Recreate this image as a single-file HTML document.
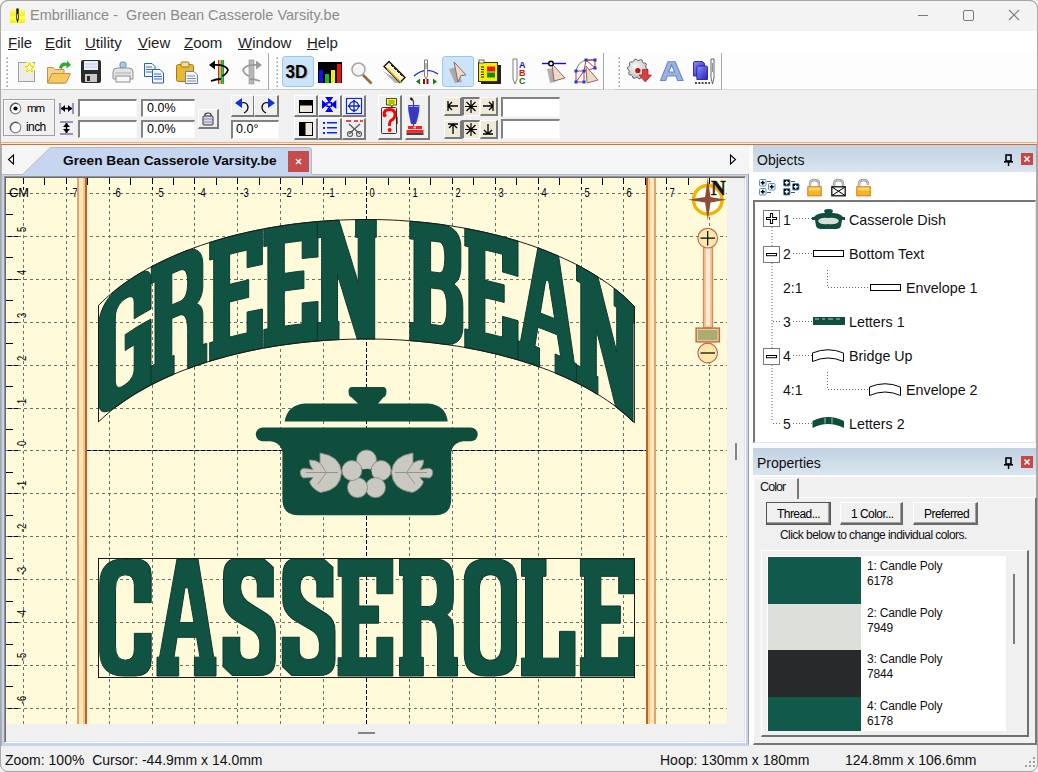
<!DOCTYPE html>
<html><head><meta charset="utf-8"><style>
html,body{margin:0;padding:0;width:1038px;height:772px;overflow:hidden;background:#f0f0f0;}
.a{position:absolute;}
.t{position:absolute;white-space:pre;line-height:1;font-family:"Liberation Sans",sans-serif;}
</style></head><body>
<div class="a" style="left:0px;top:0px;width:1038px;height:772px;background:#f0f0f0;"></div>
<div class="a" style="left:0px;top:0px;width:1038px;height:31px;background:#f3f3f3;"></div>
<div class="a" style="left:1px;top:31px;width:1036px;height:22px;background:#ffffff;"></div>
<div class="a" style="left:1px;top:53px;width:1036px;height:37px;background:#fdfdfd;"></div>
<div class="a" style="left:1px;top:89px;width:1036px;height:1px;background:#dcdcdc;"></div>
<div class="a" style="left:1px;top:142px;width:1036px;height:1px;background:#e9b27a;"></div>
<div class="a" style="left:1px;top:143px;width:1036px;height:1px;background:#fbe7d8;"></div>
<div class="a" style="left:1px;top:144px;width:1036px;height:1px;background:#c9713f;"></div>
<div class="t" style="left:30px;top:8.33px;font-size:14.5px;color:#8b8b8b;font-weight:normal;">Embrilliance -&nbsp; Green Bean Casserole Varsity.be</div>
<svg class="a" style="left:10px;top:8px" width="15" height="15" viewBox="0 0 15 15"><defs><linearGradient id="ti" x1="0" y1="0" x2="0" y2="1"><stop offset="0" stop-color="#fbfb9a"/><stop offset="0.45" stop-color="#f0f020"/><stop offset="0.55" stop-color="#ffff60"/><stop offset="1" stop-color="#f4f000"/></linearGradient></defs><rect x="0" y="1" width="15" height="14" fill="url(#ti)"/><path d="M6.3 0.5 H8.7 V11 L7.5 15 L6.3 11 Z" fill="#111"/><rect x="7.1" y="6" width="0.9" height="5" fill="#e0e0e0"/></svg>
<div class="a" style="left:918px;top:15px;width:10px;height:1px;background:#7a7a7a;"></div>
<div class="a" style="left:963px;top:10px;width:9px;height:9px;border:1px solid #7a7a7a;border-radius:2px;"></div>
<svg class="a" style="left:1008px;top:9px" width="12" height="12"><path d="M1 1 L11 11 M11 1 L1 11" stroke="#7a7a7a" stroke-width="1.1"/></svg>
<div class="a" style="left:0;top:0;width:1036px;height:770px;border:1px solid #a9a9a9;border-radius:8px;"></div>
<div class="t" style="left:8px;top:34.90px;font-size:15px;color:#1e1e1e;font-weight:normal;"><u>F</u>ile</div>
<div class="t" style="left:45px;top:34.90px;font-size:15px;color:#1e1e1e;font-weight:normal;"><u>E</u>dit</div>
<div class="t" style="left:85px;top:34.90px;font-size:15px;color:#1e1e1e;font-weight:normal;"><u>U</u>tility</div>
<div class="t" style="left:138px;top:34.90px;font-size:15px;color:#1e1e1e;font-weight:normal;"><u>V</u>iew</div>
<div class="t" style="left:184px;top:34.90px;font-size:15px;color:#1e1e1e;font-weight:normal;"><u>Z</u>oom</div>
<div class="t" style="left:238px;top:34.90px;font-size:15px;color:#1e1e1e;font-weight:normal;"><u>W</u>indow</div>
<div class="t" style="left:307px;top:34.90px;font-size:15px;color:#1e1e1e;font-weight:normal;"><u>H</u>elp</div>
<div class="a" style="left:1px;top:145px;width:747px;height:29px;background:#f5f5f5;"></div>
<svg class="a" style="left:0;top:145px" width="320" height="32"><path d="M22.5 29.5 L50.5 2.5 L309 2.5 Q311.5 2.5 311.5 5 L311.5 29.5" fill="#c6d6f1" stroke="#b8b8b8" stroke-width="1"/></svg>
<div class="t" style="left:63px;top:153.80px;font-size:13.7px;color:#0a0a0a;font-weight:bold;">Green Bean Casserole Varsity.be</div>
<div class="a" style="left:288px;top:151px;width:21px;height:21px;background:#c64b4b;"></div>
<svg class="a" style="left:294px;top:157px" width="9" height="9"><path d="M2 2 L7 7 M7 2 L2 7" stroke="#fff" stroke-width="1.5"/></svg>
<svg class="a" style="left:6px;top:154px" width="10" height="12"><path d="M7.5 1 L7.5 10 L2.5 5.5 Z" fill="none" stroke="#000" stroke-width="1.1"/></svg>
<svg class="a" style="left:728px;top:154px" width="10" height="12"><path d="M2.5 1 L2.5 10 L7.5 5.5 Z" fill="none" stroke="#000" stroke-width="1.1"/></svg>
<div class="a" style="left:1px;top:174px;width:748px;height:572px;background:#c4d4f0;"></div>
<div class="a" style="left:2px;top:174px;width:21px;height:1px;background:#b9b9b9;"></div>
<div class="a" style="left:312px;top:174px;width:436px;height:1px;background:#b9b9b9;"></div>
<div class="a" style="left:23px;top:174px;width:289px;height:1px;background:#c6d6f1;"></div>
<div class="a" style="left:1px;top:145px;width:1px;height:601px;background:#b0b0b0;"></div>
<div class="a" style="left:4px;top:176px;width:742px;height:567px;background:#f0f0f0;border-left:1px solid #939393;border-top:1px solid #939393;border-right:1px solid #fff;border-bottom:1px solid #fff;box-shadow:inset 1px 1px 0 #6a6a6a, inset -1px -1px 0 #e3e3e3;box-sizing:border-box;"></div>
<div class="a" style="left:749px;top:145px;width:4px;height:600px;background:#fff;"></div>
<div class="a" style="left:748px;top:174px;width:1px;height:571px;background:#a0a0a0;"></div>
<div class="a" style="left:735px;top:443px;width:2px;height:17px;background:#858585;"></div>
<div class="a" style="left:358px;top:732px;width:17px;height:2px;background:#858585;"></div>
<svg class="a" style="left:6px;top:178px" width="721" height="546" viewBox="6 178 721 546"><rect x="6" y="178" width="721" height="546" fill="#fffada"/><path d="M23.5 178V724M66.5 178V724M109.5 178V724M152.5 178V724M194.5 178V724M237.5 178V724M280.5 178V724M323.5 178V724M409.5 178V724M452.5 178V724M495.5 178V724M538.5 178V724M581.5 178V724M623.5 178V724M666.5 178V724M709.5 178V724" stroke="#6e6e6e" stroke-width="1" stroke-dasharray="3 3" stroke-dashoffset="3" fill="none"/><path d="M6 193.5H727M6 236.5H727M6 279.5H727M6 322.5H727M6 365.5H727M6 408.5H727M6 450.5H727M6 493.5H727M6 536.5H727M6 579.5H727M6 622.5H727M6 665.5H727M6 708.5H727" stroke="#6e6e6e" stroke-width="1" stroke-dasharray="3 3" fill="none"/><path d="M366.5 178V724" stroke="#000" stroke-width="1" stroke-dasharray="4 2" stroke-dashoffset="4" fill="none"/><path d="M87 450.5H646" stroke="#000" stroke-width="1" stroke-dasharray="4 2" fill="none"/><path d="M23.5 178V184M23.5 187V190M44.5 178V185M66.5 178V184M66.5 187V190M87.5 178V185M109.5 178V184M109.5 187V190M130.5 178V185M152.5 178V184M152.5 187V190M173.5 178V185M194.5 178V184M194.5 187V190M216.5 178V185M237.5 178V184M237.5 187V190M259.5 178V185M280.5 178V184M280.5 187V190M302.5 178V185M323.5 178V184M323.5 187V190M345.5 178V185M366.5 178V184M366.5 187V190M388.5 178V185M409.5 178V184M409.5 187V190M430.5 178V185M452.5 178V184M452.5 187V190M473.5 178V185M495.5 178V184M495.5 187V190M516.5 178V185M538.5 178V184M538.5 187V190M559.5 178V185M581.5 178V184M581.5 187V190M602.5 178V185M623.5 178V184M623.5 187V190M645.5 178V185M666.5 178V184M666.5 187V190M688.5 178V185M709.5 178V184M709.5 187V190M8 193.5H12M14 193.5H18M6 214.5H13M8 236.5H12M14 236.5H18M6 257.5H13M8 279.5H12M14 279.5H18M6 300.5H13M8 322.5H12M14 322.5H18M6 343.5H13M8 365.5H12M14 365.5H18M6 386.5H13M8 408.5H12M14 408.5H18M6 429.5H13M8 450.5H12M14 450.5H18M6 472.5H13M8 493.5H12M14 493.5H18M6 515.5H13M8 536.5H12M14 536.5H18M6 558.5H13M8 579.5H12M14 579.5H18M6 601.5H13M8 622.5H12M14 622.5H18M6 644.5H13M8 665.5H12M14 665.5H18M6 686.5H13M8 708.5H12M14 708.5H18" stroke="#000" stroke-width="1" fill="none"/><text x="69.5" y="196.8" font-family="Liberation Sans" font-size="12.5" fill="#000" transform="translate(17.38,0) scale(0.75,1)" >-7</text><text x="112.5" y="196.8" font-family="Liberation Sans" font-size="12.5" fill="#000" transform="translate(28.12,0) scale(0.75,1)" >-6</text><text x="155.5" y="196.8" font-family="Liberation Sans" font-size="12.5" fill="#000" transform="translate(38.88,0) scale(0.75,1)" >-5</text><text x="197.5" y="196.8" font-family="Liberation Sans" font-size="12.5" fill="#000" transform="translate(49.38,0) scale(0.75,1)" >-4</text><text x="240.5" y="196.8" font-family="Liberation Sans" font-size="12.5" fill="#000" transform="translate(60.12,0) scale(0.75,1)" >-3</text><text x="283.5" y="196.8" font-family="Liberation Sans" font-size="12.5" fill="#000" transform="translate(70.88,0) scale(0.75,1)" >-2</text><text x="326.5" y="196.8" font-family="Liberation Sans" font-size="12.5" fill="#000" transform="translate(81.62,0) scale(0.75,1)" >-1</text><text x="369.5" y="196.8" font-family="Liberation Sans" font-size="12.5" fill="#000" transform="translate(92.38,0) scale(0.75,1)">0</text><text x="412.5" y="196.8" font-family="Liberation Sans" font-size="12.5" fill="#000" transform="translate(103.12,0) scale(0.75,1)">1</text><text x="455.5" y="196.8" font-family="Liberation Sans" font-size="12.5" fill="#000" transform="translate(113.88,0) scale(0.75,1)">2</text><text x="498.5" y="196.8" font-family="Liberation Sans" font-size="12.5" fill="#000" transform="translate(124.62,0) scale(0.75,1)">3</text><text x="541.5" y="196.8" font-family="Liberation Sans" font-size="12.5" fill="#000" transform="translate(135.38,0) scale(0.75,1)">4</text><text x="584.5" y="196.8" font-family="Liberation Sans" font-size="12.5" fill="#000" transform="translate(146.12,0) scale(0.75,1)">5</text><text x="626.5" y="196.8" font-family="Liberation Sans" font-size="12.5" fill="#000" transform="translate(156.62,0) scale(0.75,1)">6</text><text x="669.5" y="196.8" font-family="Liberation Sans" font-size="12.5" fill="#000" transform="translate(167.38,0) scale(0.75,1)">7</text><text x="9" y="197" font-family="Liberation Sans" font-size="13" fill="#000" textLength="20" lengthAdjust="spacingAndGlyphs">CM</text><g transform="translate(26,704) rotate(-90)"><text x="0" y="0" font-family="Liberation Sans" font-size="12.5" fill="#000" transform="scale(0.75,1)">-6</text></g><g transform="translate(26,661) rotate(-90)"><text x="0" y="0" font-family="Liberation Sans" font-size="12.5" fill="#000" transform="scale(0.75,1)">-5</text></g><g transform="translate(26,618) rotate(-90)"><text x="0" y="0" font-family="Liberation Sans" font-size="12.5" fill="#000" transform="scale(0.75,1)">-4</text></g><g transform="translate(26,575) rotate(-90)"><text x="0" y="0" font-family="Liberation Sans" font-size="12.5" fill="#000" transform="scale(0.75,1)">-3</text></g><g transform="translate(26,532) rotate(-90)"><text x="0" y="0" font-family="Liberation Sans" font-size="12.5" fill="#000" transform="scale(0.75,1)">-2</text></g><g transform="translate(26,489) rotate(-90)"><text x="0" y="0" font-family="Liberation Sans" font-size="12.5" fill="#000" transform="scale(0.75,1)">-1</text></g><g transform="translate(26,446) rotate(-90)"><text x="0" y="0" font-family="Liberation Sans" font-size="12.5" fill="#000" transform="scale(0.75,1)">0</text></g><g transform="translate(26,404) rotate(-90)"><text x="0" y="0" font-family="Liberation Sans" font-size="12.5" fill="#000" transform="scale(0.75,1)">1</text></g><g transform="translate(26,361) rotate(-90)"><text x="0" y="0" font-family="Liberation Sans" font-size="12.5" fill="#000" transform="scale(0.75,1)">2</text></g><g transform="translate(26,318) rotate(-90)"><text x="0" y="0" font-family="Liberation Sans" font-size="12.5" fill="#000" transform="scale(0.75,1)">3</text></g><g transform="translate(26,275) rotate(-90)"><text x="0" y="0" font-family="Liberation Sans" font-size="12.5" fill="#000" transform="scale(0.75,1)">4</text></g><g transform="translate(26,232) rotate(-90)"><text x="0" y="0" font-family="Liberation Sans" font-size="12.5" fill="#000" transform="scale(0.75,1)">5</text></g><rect x="77" y="178" width="2" height="546" fill="#e0a868"/><rect x="79" y="178" width="2" height="546" fill="#fde0d8"/><rect x="81" y="178" width="2" height="546" fill="#fff0a0"/><rect x="83" y="178" width="2" height="546" fill="#ecc890"/><rect x="85" y="178" width="2" height="546" fill="#c0602c"/><rect x="646" y="178" width="2" height="546" fill="#c0602c"/><rect x="648" y="178" width="2" height="546" fill="#ecc890"/><rect x="650" y="178" width="2" height="546" fill="#fff0a0"/><rect x="652" y="178" width="2" height="546" fill="#fde0d8"/><rect x="654" y="178" width="2" height="546" fill="#e0a868"/><g fill="#105343" fill-rule="evenodd" stroke="#0a3a2e" stroke-width="1"><path transform="translate(99.70,559.00) scale(0.9904,0.9915)" d="M 24 0 L 36 0 Q 52 0 52 16 L 52 44 L 35 44 L 35 27 Q 35 16 26 16 Q 16 16 16 30 L 16 88 Q 16 102 26 102 Q 35 102 35 91 L 35 75 L 52 75 L 52 102 Q 52 118 36 118 L 24 118 Q 0 118 0 92 L 0 26 Q 0 0 24 0 Z"/><path transform="translate(157.00,559.00) scale(1.0000,0.9915)" d="M 0 118 L 0 99 L 2.5 99 L 20 0 L 41 0 L 56.7 99 L 59 99 L 59 118 L 37.4 118 L 37.4 99 L 43 99 L 39.6 79 L 20.1 79 L 17 99 L 21.7 99 L 21.7 118 Z M 28 29 L 31 29 L 37 64 L 22.5 64 Z"/><path transform="translate(223.00,559.00) scale(1.0058,0.9915)" d="M 12.6 0 L 40.8 0 L 50 8.4 L 50 38.3 L 34.1 38.3 L 34.1 26 Q 33.5 16.7 26 16.7 Q 17.6 16.7 17.6 27 L 17.6 30 Q 18 40 29 46 L 44 55.7 Q 52 61 52 73 L 52 101 Q 52 117.5 36 117.5 L 9.3 117.5 L 0 108.5 L 0 79 L 16.7 79 L 16.7 92 Q 17 101.3 26 101.3 Q 36.6 101.3 36.6 90 L 36.6 85 Q 36 76 29 72 L 14.2 63 Q 0.5 55 0.5 41 L 0.5 17.6 Q 0.5 0 12.6 0 Z"/><path transform="translate(282.30,559.00) scale(1.0135,0.9915)" d="M 12.6 0 L 40.8 0 L 50 8.4 L 50 38.3 L 34.1 38.3 L 34.1 26 Q 33.5 16.7 26 16.7 Q 17.6 16.7 17.6 27 L 17.6 30 Q 18 40 29 46 L 44 55.7 Q 52 61 52 73 L 52 101 Q 52 117.5 36 117.5 L 9.3 117.5 L 0 108.5 L 0 79 L 16.7 79 L 16.7 92 Q 17 101.3 26 101.3 Q 36.6 101.3 36.6 90 L 36.6 85 Q 36 76 29 72 L 14.2 63 Q 0.5 55 0.5 41 L 0.5 17.6 Q 0.5 0 12.6 0 Z"/><path transform="translate(338.10,559.00) scale(0.9945,0.9915)" d="M 0 0 L 55 0 L 55 35 L 39 35 L 39 17.5 L 20.8 17.5 L 20.8 47.4 L 40.7 47.4 L 40.7 64.8 L 20.8 64.8 L 20.8 99.6 L 39 99.6 L 39 79 L 55 79 L 55 118 L 0 118 L 0 99.6 L 4.2 99.6 L 4.2 17.5 L 0 17.5 Z"/><path transform="translate(399.50,559.00) scale(0.9898,0.9915)" d="M 0 0 L 36 0 Q 54.4 0 54.4 20 L 54.4 40 Q 54.4 52 47.7 56.3 Q 54.4 60 54.4 70 L 54.4 99.2 L 58.6 99.2 L 58.6 118 L 38.4 118 L 38.4 80 Q 38.4 61.3 29 61.3 L 21.6 61.3 L 21.6 99.2 L 24.1 99.2 L 24.1 118 L 0 118 L 0 99.2 L 3.9 99.2 L 3.9 16.7 L 0 16.7 Z M 21.6 16.7 L 30 16.7 Q 38.4 16.7 38.4 32 Q 38.4 47.9 30 47.9 L 21.6 47.9 Z"/><path transform="translate(464.30,559.00) scale(1.0038,0.9915)" d="M 22 0 L 30 0 Q 52 0 52 22 L 52 96 Q 52 118 30 118 L 22 118 Q 0 118 0 96 L 0 22 Q 0 0 22 0 Z M 26 16 Q 37 16 37 31 L 37 87 Q 37 102 26 102 Q 15 102 15 87 L 15 31 Q 15 16 26 16 Z"/><path transform="translate(521.50,559.00) scale(1.0000,0.9915)" d="M 0 0 L 24.5 0 L 24.5 17.5 L 21 17.5 L 21 100 L 38 100 L 38 73 L 53.5 73 L 53.5 118 L 0 118 L 0 100 L 4 100 L 4 17.5 L 0 17.5 Z"/><path transform="translate(580.40,559.00) scale(0.9818,0.9915)" d="M 0 0 L 55 0 L 55 35 L 39 35 L 39 17.5 L 20.8 17.5 L 20.8 47.4 L 40.7 47.4 L 40.7 64.8 L 20.8 64.8 L 20.8 99.6 L 39 99.6 L 39 79 L 55 79 L 55 118 L 0 118 L 0 99.6 L 4.2 99.6 L 4.2 17.5 L 0 17.5 Z"/><path d="M120.3 286.4L123.4 284.1L126.6 281.9L129.7 279.8L132.8 277.7L136.0 275.7L139.1 273.8L141.0 272.7L142.7 272.0L144.3 271.5L145.7 271.3L147.0 271.3L148.0 271.6L148.9 272.2L149.7 273.1L150.3 274.2L150.7 275.5L150.9 277.1L151.0 279.0L151.0 282.0L151.0 285.0L151.0 288.0L151.0 291.0L151.0 294.0L151.0 297.0L151.0 300.0L151.0 303.0L151.0 306.0L151.0 309.0L147.6 310.9L144.3 312.8L140.9 314.7L137.5 316.7L134.2 318.8L134.2 315.6L134.2 312.4L134.2 309.2L134.2 306.0L134.2 302.8L134.1 301.3L133.9 299.9L133.5 298.8L133.1 298.0L132.4 297.3L131.7 296.9L130.8 296.7L129.8 296.8L128.6 297.1L127.3 297.6L125.8 298.4L124.3 299.5L122.8 300.6L121.5 301.8L120.4 303.1L119.3 304.4L118.4 305.9L117.6 307.4L116.9 309.0L116.3 310.7L115.9 312.4L115.6 314.3L115.4 316.1L115.3 318.1L115.3 321.2L115.3 324.3L115.3 327.4L115.3 330.4L115.3 333.5L115.3 336.6L115.3 339.7L115.3 342.8L115.3 345.9L115.3 349.0L115.3 352.0L115.3 355.1L115.3 358.2L115.3 361.3L115.3 364.4L115.3 367.5L115.3 370.6L115.3 373.6L115.3 376.7L115.3 379.8L115.4 381.7L115.6 383.3L115.9 384.6L116.3 385.7L116.9 386.5L117.6 387.1L118.4 387.4L119.3 387.4L120.4 387.2L121.5 386.8L122.8 386.1L124.3 385.2L125.8 384.1L127.3 382.9L128.6 381.7L129.8 380.4L130.8 379.1L131.7 377.8L132.4 376.4L133.1 375.0L133.5 373.5L133.9 372.0L134.1 370.4L134.2 368.7L134.2 365.7L134.2 362.7L134.2 359.7L134.2 356.7L134.2 353.8L134.2 350.8L134.2 347.8L134.2 344.8L131.2 346.7L128.2 348.6L125.2 350.6L125.2 347.4L125.2 344.3L125.2 341.1L125.2 337.9L125.2 334.7L128.5 332.5L131.7 330.4L134.9 328.3L138.1 326.3L141.3 324.4L144.6 322.6L147.8 320.8L151.0 319.1L151.0 322.1L151.0 325.1L151.0 328.1L151.0 331.1L151.0 334.1L151.0 337.1L151.0 340.1L151.0 343.1L151.0 346.1L151.0 349.1L151.0 352.1L151.0 355.1L151.0 358.1L151.0 361.1L151.0 364.1L151.0 367.1L151.0 370.1L151.0 373.1L151.0 376.1L151.0 379.1L151.0 382.1L151.0 385.1L147.9 386.8L144.9 388.4L141.8 390.2L138.7 391.9L135.6 393.8L132.6 395.7L129.5 397.6L126.4 399.7L123.4 401.8L120.3 404.0L116.8 406.4L113.6 408.4L110.8 410.0L108.2 411.1L105.9 411.7L103.9 411.8L102.3 411.3L100.9 410.4L99.9 408.8L99.1 406.7L98.7 403.9L98.5 400.6L98.5 397.6L98.5 394.5L98.5 391.4L98.5 388.4L98.5 385.3L98.5 382.3L98.5 379.2L98.5 376.2L98.5 373.1L98.5 370.0L98.5 367.0L98.5 363.9L98.5 360.9L98.5 357.8L98.5 354.8L98.5 351.7L98.5 348.6L98.5 345.6L98.5 342.5L98.5 339.5L98.5 336.4L98.5 333.4L98.5 330.3L98.5 327.2L98.7 323.6L99.1 320.0L99.9 316.3L100.9 312.7L102.3 309.1L103.9 305.5L105.9 302.0L108.2 298.6L110.8 295.4L113.6 292.2L116.8 289.2L120.3 286.4Z"/><path d="M151.3 266.8L154.1 265.3L157.0 263.9L159.8 262.5L162.7 261.1L165.5 259.7L168.3 258.4L171.2 257.1L174.0 255.9L176.9 254.6L179.7 253.4L182.6 252.3L185.4 251.1L188.2 250.2L190.7 249.6L193.0 249.5L195.1 249.7L196.9 250.3L198.5 251.3L199.8 252.6L200.9 254.4L201.7 256.4L202.3 258.9L202.7 261.7L202.8 264.9L202.8 268.2L202.8 271.6L202.8 275.0L202.8 278.3L202.8 281.7L202.8 285.0L202.8 287.0L202.6 288.9L202.4 290.7L202.1 292.4L201.7 294.1L201.2 295.7L200.7 297.2L200.0 298.6L199.3 300.0L198.4 301.3L197.5 302.5L196.5 303.6L197.5 303.9L198.4 304.3L199.3 304.9L200.0 305.6L200.7 306.4L201.2 307.3L201.7 308.3L202.1 309.4L202.4 310.7L202.6 312.1L202.8 313.6L202.8 315.2L202.8 318.5L202.8 321.7L202.8 325.0L202.8 328.3L202.8 331.5L202.8 334.8L202.8 338.1L202.8 341.3L202.8 344.6L206.8 343.3L206.8 346.5L206.8 349.6L206.8 352.8L206.8 355.9L206.8 359.1L206.8 362.2L203.6 363.3L200.4 364.3L197.2 365.4L194.0 366.5L190.9 367.7L187.7 368.9L187.7 365.7L187.7 362.5L187.7 359.3L187.7 356.1L187.7 352.9L187.7 349.8L187.7 346.6L187.7 343.4L187.7 340.2L187.7 337.0L187.7 333.8L187.7 330.7L187.6 327.7L187.4 325.0L187.1 322.6L186.7 320.6L186.1 318.9L185.4 317.4L184.6 316.3L183.7 315.5L182.7 315.0L181.5 314.8L180.2 314.9L178.8 315.4L175.3 316.9L171.8 318.4L171.8 321.5L171.8 324.7L171.8 327.9L171.8 331.0L171.8 334.2L171.8 337.4L171.8 340.6L171.8 343.7L171.8 346.9L171.8 350.1L171.8 353.2L171.8 356.4L174.1 355.4L174.1 358.5L174.1 361.7L174.1 364.8L174.1 368.0L174.1 371.1L174.1 374.3L171.3 375.5L168.4 376.7L165.6 378.0L162.7 379.3L159.9 380.7L157.0 382.1L154.2 383.5L151.3 385.0L151.3 381.8L151.3 378.7L151.3 375.6L151.3 372.4L151.3 369.3L151.3 366.1L155.0 364.2L155.0 361.2L155.0 358.1L155.0 355.1L155.0 352.0L155.0 348.9L155.0 345.9L155.0 342.8L155.0 339.8L155.0 336.7L155.0 333.6L155.0 330.6L155.0 327.5L155.0 324.5L155.0 321.4L155.0 318.3L155.0 315.3L155.0 312.2L155.0 309.2L155.0 306.1L155.0 303.0L155.0 300.0L155.0 296.9L155.0 293.9L155.0 290.8L155.0 287.7L155.0 284.7L155.0 281.6L151.3 283.6L151.3 280.2L151.3 276.9L151.3 273.5L151.3 270.2ZM171.8 273.6L175.7 271.9L179.7 270.2L181.0 269.8L182.1 269.6L183.2 269.8L184.1 270.1L185.0 270.8L185.7 271.7L186.3 272.8L186.8 274.2L187.2 275.9L187.4 277.8L187.6 280.0L187.7 282.4L187.6 285.0L187.4 287.4L187.2 289.6L186.8 291.6L186.3 293.5L185.7 295.2L185.0 296.7L184.1 298.0L183.2 299.1L182.1 300.1L181.0 300.9L179.7 301.5L175.7 303.2L171.8 304.9L171.8 301.8L171.8 298.7L171.8 295.5L171.8 292.4L171.8 289.3L171.8 286.1L171.8 283.0L171.8 279.9L171.8 276.7Z"/><path d="M209.7 242.5L212.6 241.6L215.6 240.7L218.5 239.8L221.4 238.9L224.3 238.1L227.3 237.3L230.2 236.5L233.1 235.7L236.0 235.0L239.0 234.3L241.9 233.6L244.8 232.9L247.8 232.2L250.7 231.6L253.6 230.9L256.5 230.3L259.5 229.7L262.4 229.2L262.4 232.4L262.4 235.6L262.4 238.8L262.4 242.0L262.4 245.2L262.4 248.4L262.4 251.7L262.4 254.9L262.4 258.1L262.4 261.3L262.4 264.5L259.3 265.1L256.3 265.7L253.2 266.4L250.1 267.0L247.1 267.7L247.1 264.2L247.1 260.6L247.1 257.1L247.1 253.6L247.1 250.0L244.2 250.7L241.3 251.4L238.3 252.1L235.4 252.8L232.5 253.5L229.6 254.3L229.6 257.7L229.6 261.0L229.6 264.4L229.6 267.7L229.6 271.1L229.6 274.4L229.6 277.8L229.6 281.1L229.6 284.5L232.8 283.6L236.0 282.8L239.2 282.1L242.3 281.3L245.5 280.6L248.7 279.9L248.7 283.4L248.7 286.9L248.7 290.4L248.7 293.9L248.7 297.4L245.5 298.1L242.3 298.9L239.2 299.6L236.0 300.4L232.8 301.2L229.6 302.0L229.6 305.2L229.6 308.4L229.6 311.6L229.6 314.8L229.6 318.0L229.6 321.2L229.6 324.3L229.6 327.5L229.6 330.7L229.6 333.9L229.6 337.1L232.5 336.4L235.4 335.6L238.3 334.9L241.3 334.2L244.2 333.6L247.1 332.9L247.1 329.4L247.1 326.0L247.1 322.5L247.1 319.1L247.1 315.6L247.1 312.1L250.1 311.4L253.2 310.8L256.3 310.2L259.3 309.6L262.4 309.0L262.4 312.0L262.4 315.0L262.4 318.1L262.4 321.1L262.4 324.1L262.4 327.2L262.4 330.2L262.4 333.2L262.4 336.3L262.4 339.3L262.4 342.3L262.4 345.3L262.4 348.4L259.5 348.9L256.5 349.5L253.6 350.1L250.7 350.7L247.8 351.3L244.8 352.0L241.9 352.7L239.0 353.3L236.0 354.0L233.1 354.8L230.2 355.5L227.3 356.3L224.3 357.1L221.4 357.9L218.5 358.7L215.6 359.6L212.6 360.4L209.7 361.3L209.7 358.2L209.7 355.1L209.7 352.1L209.7 349.0L209.7 345.9L209.7 342.8L213.7 341.6L213.7 338.5L213.7 335.4L213.7 332.4L213.7 329.3L213.7 326.2L213.7 323.2L213.7 320.1L213.7 317.1L213.7 314.0L213.7 310.9L213.7 307.9L213.7 304.8L213.7 301.7L213.7 298.7L213.7 295.6L213.7 292.6L213.7 289.5L213.7 286.4L213.7 283.4L213.7 280.3L213.7 277.2L213.7 274.2L213.7 271.1L213.7 268.0L213.7 265.0L213.7 261.9L213.7 258.9L209.7 260.1L209.7 256.6L209.7 253.1L209.7 249.5L209.7 246.0Z"/><path d="M263.8 228.9L266.8 228.3L269.8 227.8L272.8 227.3L275.8 226.8L278.9 226.3L281.9 225.8L284.9 225.3L287.9 224.9L290.9 224.5L293.9 224.1L296.9 223.7L299.9 223.4L302.9 223.0L306.0 222.7L309.0 222.4L312.0 222.1L315.0 221.8L318.0 221.5L318.0 224.7L318.0 228.0L318.0 231.2L318.0 234.4L318.0 237.6L318.0 240.8L318.0 244.1L318.0 247.3L318.0 250.5L318.0 253.7L318.0 257.0L314.8 257.2L311.7 257.5L308.5 257.8L305.4 258.2L302.2 258.5L302.2 255.0L302.2 251.4L302.2 247.9L302.2 244.3L302.2 240.8L299.2 241.1L296.3 241.5L293.3 241.9L290.3 242.3L287.3 242.7L284.3 243.1L284.3 246.5L284.3 249.9L284.3 253.2L284.3 256.6L284.3 259.9L284.3 263.3L284.3 266.6L284.3 270.0L284.3 273.4L287.6 272.9L290.8 272.5L294.1 272.0L297.4 271.6L300.6 271.2L303.9 270.9L303.9 274.4L303.9 277.9L303.9 281.4L303.9 284.9L303.9 288.5L300.6 288.8L297.4 289.2L294.1 289.6L290.8 290.1L287.6 290.5L284.3 291.0L284.3 294.2L284.3 297.4L284.3 300.6L284.3 303.8L284.3 307.0L284.3 310.2L284.3 313.4L284.3 316.6L284.3 319.8L284.3 323.0L284.3 326.2L287.3 325.7L290.3 325.3L293.3 324.9L296.3 324.6L299.2 324.2L302.2 323.9L302.2 320.4L302.2 316.9L302.2 313.4L302.2 310.0L302.2 306.5L302.2 303.0L305.4 302.7L308.5 302.4L311.7 302.0L314.8 301.8L318.0 301.5L318.0 304.5L318.0 307.6L318.0 310.6L318.0 313.6L318.0 316.7L318.0 319.7L318.0 322.7L318.0 325.8L318.0 328.8L318.0 331.9L318.0 334.9L318.0 337.9L318.0 341.0L315.0 341.2L312.0 341.5L309.0 341.8L306.0 342.1L302.9 342.4L299.9 342.7L296.9 343.1L293.9 343.5L290.9 343.9L287.9 344.3L284.9 344.7L281.9 345.1L278.9 345.6L275.8 346.0L272.8 346.5L269.8 347.0L266.8 347.6L263.8 348.1L263.8 345.0L263.8 341.9L263.8 338.8L263.8 335.7L263.8 332.6L263.8 329.5L267.9 328.8L267.9 325.7L267.9 322.6L267.9 319.6L267.9 316.5L267.9 313.4L267.9 310.3L267.9 307.3L267.9 304.2L267.9 301.1L267.9 298.0L267.9 295.0L267.9 291.9L267.9 288.8L267.9 285.8L267.9 282.7L267.9 279.6L267.9 276.5L267.9 273.5L267.9 270.4L267.9 267.3L267.9 264.2L267.9 261.2L267.9 258.1L267.9 255.0L267.9 252.0L267.9 248.9L267.9 245.8L263.8 246.6L263.8 243.0L263.8 239.5L263.8 236.0L263.8 232.4Z"/><path d="M317.3 221.6L320.4 221.3L323.5 221.1L326.6 220.9L329.7 220.7L332.8 220.5L335.9 220.3L339.0 220.1L339.9 223.1L340.9 226.0L341.8 229.0L342.7 231.9L343.6 234.9L344.5 237.8L345.4 240.8L346.3 243.8L347.2 246.7L348.2 249.7L349.1 252.6L350.0 255.6L350.9 258.6L351.8 261.5L352.7 264.5L353.6 267.5L354.5 270.4L355.5 273.4L356.4 276.4L357.3 279.4L358.2 282.3L358.2 279.1L358.2 275.9L358.2 272.7L358.2 269.5L358.2 266.2L358.2 263.0L358.2 259.8L358.2 256.6L358.2 253.4L358.2 250.2L358.2 246.9L358.2 243.7L358.2 240.5L358.2 237.3L355.6 237.3L355.6 233.8L355.6 230.2L355.6 226.7L355.6 223.1L355.6 219.6L359.0 219.5L362.5 219.5L365.9 219.5L369.4 219.5L372.8 219.5L376.3 219.6L376.3 223.1L376.3 226.7L376.3 230.2L376.3 233.8L376.3 237.3L374.7 237.3L374.7 240.4L374.7 243.5L374.7 246.5L374.7 249.6L374.7 252.7L374.7 255.8L374.7 258.9L374.7 262.0L374.7 265.0L374.7 268.1L374.7 271.2L374.7 274.3L374.7 277.4L374.7 280.5L374.7 283.6L374.7 286.6L374.7 289.7L374.7 292.8L374.7 295.9L374.7 299.0L374.7 302.1L374.7 305.1L374.7 308.2L374.7 311.3L374.7 314.4L374.7 317.5L374.7 320.6L374.7 323.6L374.7 326.7L374.7 329.8L374.7 332.9L374.7 336.0L374.7 339.1L371.2 339.0L367.7 339.0L364.2 339.0L360.7 339.0L357.2 339.1L356.3 336.1L355.4 333.2L354.5 330.3L353.6 327.3L352.7 324.4L351.8 321.5L350.9 318.6L350.0 315.6L349.1 312.7L348.2 309.8L347.3 306.9L346.4 304.0L345.5 301.1L344.6 298.1L343.7 295.2L342.8 292.3L342.0 289.4L341.1 286.5L340.2 283.6L339.3 280.7L338.4 277.8L337.5 274.9L337.5 278.0L337.5 281.1L337.5 284.2L337.5 287.3L337.5 290.4L337.5 293.5L337.5 296.6L337.5 299.7L337.5 302.8L337.5 305.9L337.5 309.0L337.5 312.1L337.5 315.3L337.5 318.4L337.5 321.5L339.0 321.4L339.0 324.4L339.0 327.5L339.0 330.5L339.0 333.5L339.0 336.6L339.0 339.6L335.9 339.8L332.8 339.9L329.7 340.1L326.6 340.3L323.5 340.5L320.4 340.8L317.3 341.0L317.3 338.0L317.3 334.9L317.3 331.9L317.3 328.9L317.3 325.8L317.3 322.8L321.6 322.5L321.6 319.4L321.6 316.4L321.6 313.3L321.6 310.3L321.6 307.3L321.6 304.2L321.6 301.2L321.6 298.2L321.6 295.1L321.6 292.1L321.6 289.0L321.6 286.0L321.6 283.0L321.6 279.9L321.6 276.9L321.6 273.9L321.6 270.8L321.6 267.8L321.6 264.8L321.6 261.7L321.6 258.7L321.6 255.6L321.6 252.6L321.6 249.6L321.6 246.5L321.6 243.5L321.6 240.5L321.6 237.4L317.3 237.8L317.3 234.5L317.3 231.3L317.3 228.1L317.3 224.8Z"/><path d="M409.8 221.2L413.0 221.4L416.2 221.7L419.4 222.0L422.6 222.3L425.8 222.7L429.0 223.0L432.2 223.4L435.4 223.8L438.6 224.2L441.8 224.6L444.8 225.2L447.6 226.0L450.1 227.1L452.4 228.4L454.3 230.0L456.1 231.8L457.5 233.9L458.7 236.2L459.6 238.7L460.3 241.5L460.7 244.5L460.8 247.8L460.8 250.8L460.8 253.8L460.8 256.9L460.8 259.9L460.8 262.9L460.8 266.0L460.8 268.2L460.6 270.4L460.4 272.4L460.0 274.2L459.6 276.0L459.1 277.5L458.4 279.0L457.7 280.3L456.9 281.4L455.9 282.4L454.9 283.3L453.8 284.0L455.2 285.2L456.6 286.4L457.7 287.9L458.8 289.4L459.7 291.1L460.6 292.9L461.2 294.9L461.8 297.0L462.2 299.2L462.6 301.6L462.7 304.1L462.8 306.7L462.8 310.1L462.8 313.5L462.8 316.8L462.8 320.2L462.8 323.6L462.8 326.9L462.7 330.1L462.2 333.0L461.6 335.6L460.6 337.8L459.3 339.7L457.8 341.3L456.0 342.5L453.9 343.4L451.6 344.1L448.9 344.4L446.0 344.4L442.8 344.1L439.8 343.7L436.8 343.3L433.8 342.9L430.8 342.6L427.8 342.3L424.8 342.0L421.8 341.7L418.8 341.4L415.8 341.1L412.8 340.9L409.8 340.6L409.8 337.6L409.8 334.6L409.8 331.5L409.8 328.5L409.8 325.4L409.8 322.4L414.0 322.7L414.0 319.7L414.0 316.6L414.0 313.5L414.0 310.4L414.0 307.3L414.0 304.2L414.0 301.1L414.0 298.0L414.0 294.9L414.0 291.8L414.0 288.7L414.0 285.6L414.0 282.5L414.0 279.4L414.0 276.4L414.0 273.3L414.0 270.2L414.0 267.1L414.0 264.0L414.0 260.9L414.0 257.8L414.0 254.7L414.0 251.6L414.0 248.5L414.0 245.4L414.0 242.3L414.0 239.2L409.8 238.9L409.8 235.4L409.8 231.8L409.8 228.3L409.8 224.7ZM430.6 240.9L434.7 241.4L438.8 241.9L439.8 242.1L440.6 242.5L441.4 243.2L442.1 244.0L442.8 245.0L443.3 246.2L443.8 247.6L444.1 249.1L444.4 250.9L444.6 252.9L444.8 255.0L444.8 257.4L444.8 260.0L444.6 262.3L444.4 264.4L444.1 266.3L443.8 267.9L443.3 269.3L442.8 270.5L442.1 271.4L441.4 272.1L440.6 272.5L439.8 272.8L438.8 272.7L434.7 272.2L430.6 271.7L430.6 268.7L430.6 265.6L430.6 262.5L430.6 259.4L430.6 256.3L430.6 253.2L430.6 250.1L430.6 247.1L430.6 244.0ZM430.6 287.9L433.7 288.3L436.7 288.7L439.8 289.1L440.9 289.3L441.9 289.9L442.9 290.6L443.7 291.6L444.4 292.8L445.1 294.3L445.6 296.0L446.0 298.0L446.4 300.2L446.6 302.6L446.8 305.3L446.8 308.2L446.8 311.1L446.6 313.8L446.4 316.1L446.0 318.2L445.6 320.1L445.1 321.6L444.4 322.9L443.7 324.0L442.9 324.7L441.9 325.3L440.9 325.5L439.8 325.5L436.7 325.1L433.7 324.7L430.6 324.4L430.6 321.3L430.6 318.3L430.6 315.3L430.6 312.2L430.6 309.2L430.6 306.2L430.6 303.1L430.6 300.1L430.6 297.0L430.6 294.0L430.6 291.0Z"/><path d="M464.8 228.3L467.8 228.8L470.7 229.4L473.7 230.0L476.6 230.6L479.6 231.2L482.5 231.8L485.5 232.5L488.4 233.2L491.4 233.9L494.4 234.6L497.3 235.3L500.3 236.1L503.2 236.9L506.2 237.7L509.1 238.5L512.1 239.4L515.0 240.2L518.0 241.1L518.0 244.3L518.0 247.6L518.0 250.8L518.0 254.0L518.0 257.2L518.0 260.4L518.0 263.6L518.0 266.8L518.0 270.0L518.0 273.2L518.0 276.4L514.9 275.5L511.8 274.6L508.7 273.7L505.6 272.8L502.5 272.0L502.5 268.5L502.5 264.9L502.5 261.4L502.5 257.9L502.5 254.3L499.6 253.6L496.7 252.8L493.7 252.1L490.8 251.4L487.9 250.7L484.9 250.0L484.9 253.4L484.9 256.7L484.9 260.1L484.9 263.4L484.9 266.8L484.9 270.2L484.9 273.5L484.9 276.9L484.9 280.2L488.1 280.9L491.3 281.7L494.5 282.5L497.8 283.3L501.0 284.1L504.2 284.9L504.2 288.4L504.2 292.0L504.2 295.5L504.2 299.0L504.2 302.5L501.0 301.6L497.8 300.8L494.5 300.0L491.3 299.3L488.1 298.5L484.9 297.8L484.9 301.0L484.9 304.2L484.9 307.4L484.9 310.6L484.9 313.7L484.9 316.9L484.9 320.1L484.9 323.3L484.9 326.5L484.9 329.7L484.9 332.9L487.9 333.6L490.8 334.2L493.7 334.9L496.7 335.7L499.6 336.4L502.5 337.1L502.5 333.7L502.5 330.2L502.5 326.8L502.5 323.3L502.5 319.8L502.5 316.4L505.6 317.2L508.7 318.0L511.8 318.9L514.9 319.8L518.0 320.7L518.0 323.7L518.0 326.8L518.0 329.8L518.0 332.8L518.0 335.8L518.0 338.9L518.0 341.9L518.0 344.9L518.0 347.9L518.0 350.9L518.0 354.0L518.0 357.0L518.0 360.0L515.0 359.1L512.1 358.3L509.1 357.5L506.2 356.7L503.2 355.9L500.3 355.1L497.3 354.4L494.4 353.7L491.4 353.0L488.4 352.3L485.5 351.6L482.5 351.0L479.6 350.3L476.6 349.7L473.7 349.2L470.7 348.6L467.8 348.0L464.8 347.5L464.8 344.4L464.8 341.3L464.8 338.2L464.8 335.1L464.8 332.0L464.8 328.9L468.9 329.6L468.9 326.6L468.9 323.5L468.9 320.4L468.9 317.4L468.9 314.3L468.9 311.2L468.9 308.1L468.9 305.1L468.9 302.0L468.9 298.9L468.9 295.9L468.9 292.8L468.9 289.7L468.9 286.6L468.9 283.6L468.9 280.5L468.9 277.4L468.9 274.3L468.9 271.3L468.9 268.2L468.9 265.1L468.9 262.1L468.9 259.0L468.9 255.9L468.9 252.8L468.9 249.8L468.9 246.7L464.8 245.9L464.8 242.4L464.8 238.9L464.8 235.3L464.8 231.8Z"/><path d="M518.0 360.0L518.0 356.8L518.0 353.6L518.0 350.4L518.0 347.3L518.0 344.1L518.0 340.9L520.5 341.6L521.0 338.8L521.5 335.9L522.1 333.0L522.6 330.2L523.1 327.3L523.6 324.5L524.2 321.6L524.7 318.8L525.2 315.9L525.7 313.1L526.3 310.2L526.8 307.4L527.3 304.5L527.8 301.7L528.4 298.8L528.9 296.0L529.4 293.1L529.9 290.3L530.5 287.5L531.0 284.6L531.5 281.8L532.0 278.9L532.6 276.1L533.1 273.3L533.6 270.4L534.1 267.6L534.7 264.8L535.2 261.9L535.7 259.1L536.3 256.3L536.8 253.5L537.3 250.6L537.8 247.8L540.8 248.9L543.8 250.0L546.8 251.2L549.7 252.4L552.7 253.6L555.7 254.9L558.7 256.2L559.1 259.4L559.6 262.6L560.1 265.8L560.5 269.0L561.0 272.2L561.5 275.5L562.0 278.7L562.4 281.9L562.9 285.1L563.4 288.4L563.8 291.6L564.3 294.8L564.8 298.0L565.3 301.3L565.7 304.5L566.2 307.7L566.7 310.9L567.1 314.2L567.6 317.4L568.1 320.6L568.6 323.9L569.0 327.1L569.5 330.3L570.0 333.5L570.4 336.8L570.9 340.0L571.4 343.2L571.9 346.5L572.3 349.7L572.8 352.9L573.3 356.2L573.7 359.4L574.2 362.7L576.5 363.8L576.5 367.0L576.5 370.1L576.5 373.3L576.5 376.5L576.5 379.7L576.5 382.8L573.4 381.3L570.4 379.8L567.3 378.4L564.3 377.0L561.2 375.7L558.1 374.4L555.1 373.1L555.1 369.9L555.1 366.7L555.1 363.6L555.1 360.4L555.1 357.2L555.1 354.0L560.6 356.4L560.1 352.8L559.5 349.2L559.0 345.6L558.4 342.0L557.8 338.4L557.3 334.8L554.0 333.5L550.8 332.2L547.6 330.9L544.4 329.7L541.2 328.5L537.9 327.3L537.4 330.5L536.9 333.6L536.4 336.8L535.9 340.0L535.4 343.2L534.9 346.3L539.5 348.0L539.5 351.2L539.5 354.3L539.5 357.5L539.5 360.7L539.5 363.9L539.5 367.1L536.4 366.0L533.4 364.9L530.3 363.9L527.2 362.9L524.1 361.9L521.1 360.9ZM545.8 280.0L548.7 281.1L549.3 284.5L549.8 288.0L550.4 291.4L550.9 294.8L551.4 298.2L552.0 301.6L552.5 305.0L553.1 308.4L553.6 311.9L554.1 315.3L554.7 318.7L551.1 317.2L547.5 315.8L543.9 314.4L540.3 313.1L540.8 310.1L541.3 307.0L541.8 304.0L542.3 301.0L542.8 298.0L543.3 295.0L543.8 292.0L544.3 289.0L544.8 286.0L545.3 283.0Z"/><path d="M576.5 264.6L579.6 266.2L582.6 267.9L585.7 269.6L588.7 271.3L591.8 273.1L594.8 275.0L597.9 276.9L598.8 280.4L599.7 283.9L600.6 287.5L601.5 291.0L602.4 294.5L603.2 298.1L604.1 301.6L605.0 305.2L605.9 308.8L606.8 312.3L607.7 315.9L608.6 319.5L609.5 323.1L610.4 326.7L611.3 330.2L612.2 333.9L613.1 337.5L614.0 341.1L614.9 344.7L615.8 348.3L616.7 352.0L616.7 348.8L616.7 345.6L616.7 342.5L616.7 339.3L616.7 336.2L616.7 333.0L616.7 329.8L616.7 326.7L616.7 323.5L616.7 320.3L616.7 317.2L616.7 314.0L616.7 310.8L616.7 307.7L614.1 305.7L614.1 302.2L614.1 298.7L614.1 295.2L614.1 291.8L614.1 288.3L617.5 290.9L620.9 293.7L624.3 296.7L627.7 299.8L631.1 303.0L634.5 306.5L634.5 309.9L634.5 313.4L634.5 316.9L634.5 320.3L634.5 323.8L633.0 322.2L633.0 325.3L633.0 328.3L633.0 331.3L633.0 334.3L633.0 337.3L633.0 340.4L633.0 343.4L633.0 346.4L633.0 349.4L633.0 352.4L633.0 355.5L633.0 358.5L633.0 361.5L633.0 364.5L633.0 367.5L633.0 370.6L633.0 373.6L633.0 376.6L633.0 379.6L633.0 382.6L633.0 385.7L633.0 388.7L633.0 391.7L633.0 394.7L633.0 397.7L633.0 400.8L633.0 403.8L633.0 406.8L633.0 409.8L633.0 412.8L633.0 415.9L633.0 418.9L633.0 421.9L629.5 418.6L626.1 415.4L622.6 412.5L619.1 409.6L615.7 406.9L614.8 403.4L613.9 399.8L613.0 396.3L612.2 392.7L611.3 389.2L610.4 385.6L609.5 382.1L608.6 378.6L607.8 375.1L606.9 371.6L606.0 368.1L605.1 364.6L604.3 361.1L603.4 357.6L602.5 354.1L601.6 350.6L600.7 347.2L599.9 343.7L599.0 340.2L598.1 336.8L597.2 333.3L596.3 329.8L596.3 332.9L596.3 336.0L596.3 339.0L596.3 342.1L596.3 345.2L596.3 348.2L596.3 351.3L596.3 354.4L596.3 357.4L596.3 360.5L596.3 363.5L596.3 366.6L596.3 369.7L596.3 372.7L596.3 375.8L597.9 376.7L597.9 379.7L597.9 382.7L597.9 385.7L597.9 388.7L597.9 391.7L597.9 394.7L594.8 392.9L591.8 391.1L588.7 389.3L585.7 387.6L582.6 386.0L579.6 384.4L576.5 382.8L576.5 379.8L576.5 376.8L576.5 373.8L576.5 370.8L576.5 367.8L576.5 364.8L580.8 367.0L580.8 364.0L580.8 361.0L580.8 358.0L580.8 355.0L580.8 352.0L580.8 349.0L580.8 346.0L580.8 343.0L580.8 340.0L580.8 337.0L580.8 334.0L580.8 331.0L580.8 327.9L580.8 324.9L580.8 321.9L580.8 318.9L580.8 315.9L580.8 312.9L580.8 309.9L580.8 306.9L580.8 303.9L580.8 300.9L580.8 297.9L580.8 294.9L580.8 291.9L580.8 288.9L580.8 285.9L580.8 282.9L576.5 280.7L576.5 277.5L576.5 274.3L576.5 271.0L576.5 267.8Z"/></g><rect x="98.5" y="558.5" width="536" height="119" fill="none" stroke="#1a1a1a" stroke-width="1"/><path d="M98.5 305.4L103.9 300.2L109.2 295.3L114.6 290.8L119.9 286.7L125.3 282.8L130.7 279.1L136.0 275.7L141.4 272.4L146.7 269.3L152.1 266.4L157.4 263.6L162.8 261.0L168.2 258.5L173.5 256.1L178.9 253.8L184.2 251.6L189.6 249.5L195.0 247.5L200.3 245.6L205.7 243.8L211.0 242.1L216.4 240.4L221.8 238.8L227.1 237.3L232.5 235.9L237.8 234.5L243.2 233.3L248.6 232.0L253.9 230.9L259.3 229.8L264.6 228.7L270.0 227.8L275.3 226.8L280.7 226.0L286.1 225.2L291.4 224.4L296.8 223.7L302.1 223.1L307.5 222.5L312.9 222.0L318.2 221.5L323.6 221.1L328.9 220.7L334.3 220.4L339.7 220.1L345.0 219.9L350.4 219.7L355.7 219.6L361.1 219.5L366.4 219.5L371.8 219.5L377.2 219.6L382.5 219.7L387.9 219.9L393.2 220.1L398.6 220.4L404.0 220.8L409.3 221.1L414.7 221.6L420.0 222.1L425.4 222.6L430.8 223.2L436.1 223.8L441.5 224.5L446.8 225.3L452.2 226.1L457.6 227.0L462.9 227.9L468.3 228.9L473.6 230.0L479.0 231.1L484.3 232.2L489.7 233.5L495.1 234.8L500.4 236.1L505.8 237.6L511.1 239.1L516.5 240.7L521.9 242.4L527.2 244.1L532.6 245.9L537.9 247.8L543.3 249.9L548.7 252.0L554.0 254.2L559.4 256.5L564.7 258.9L570.1 261.4L575.5 264.1L580.8 266.9L586.2 269.9L591.5 273.0L596.9 276.3L602.2 279.7L607.6 283.4L613.0 287.4L618.3 291.6L623.7 296.1L629.0 301.0L634.4 306.4L634.4 422.8L629.0 417.7L623.7 412.9L618.3 408.6L613.0 404.5L607.6 400.7L602.2 397.1L596.9 393.8L591.5 390.6L586.2 387.6L580.8 384.7L575.5 382.0L570.1 379.5L564.7 377.0L559.4 374.7L554.0 372.4L548.7 370.3L543.3 368.3L537.9 366.4L532.6 364.5L527.2 362.7L521.9 361.1L516.5 359.4L511.1 357.9L505.8 356.5L500.4 355.1L495.1 353.7L489.7 352.5L484.3 351.3L479.0 350.2L473.6 349.1L468.3 348.1L462.9 347.1L457.6 346.2L452.2 345.4L446.8 344.6L441.5 343.9L436.1 343.2L430.8 342.6L425.4 342.0L420.0 341.5L414.7 341.0L409.3 340.6L404.0 340.2L398.6 339.9L393.2 339.6L387.9 339.4L382.5 339.2L377.2 339.1L371.8 339.0L366.4 339.0L361.1 339.0L355.7 339.1L350.4 339.2L345.0 339.4L339.7 339.6L334.3 339.8L328.9 340.2L323.6 340.5L318.2 340.9L312.9 341.4L307.5 341.9L302.1 342.5L296.8 343.1L291.4 343.8L286.1 344.5L280.7 345.3L275.3 346.1L270.0 347.0L264.6 347.9L259.3 348.9L253.9 350.0L248.6 351.1L243.2 352.3L237.8 353.5L232.5 354.8L227.1 356.2L221.8 357.7L216.4 359.2L211.0 360.8L205.7 362.4L200.3 364.2L195.0 366.0L189.6 368.0L184.2 370.0L178.9 372.1L173.5 374.3L168.2 376.6L162.8 379.0L157.4 381.6L152.1 384.3L146.7 387.1L141.4 390.1L136.0 393.2L130.7 396.5L125.3 400.1L119.9 403.8L114.6 407.9L109.2 412.2L103.9 416.8L98.5 421.9Z" fill="none" stroke="#1a1a1a" stroke-width="1"/><g fill="#0f4d3d">
<path d="M352 387 L383 387 Q386.5 387 386.5 391.5 Q386.3 396.5 383.5 397.3 L378.5 403 L375 410 L361 410 L357.5 403 L351.5 397.3 Q348.6 396.5 348.5 391.5 Q348.5 387 352 387 Z"/>
<path d="M284.7 421.6 Q287 405 305 403.5 L428 403.5 Q446 405 447.7 421.6 Z"/>
<rect x="255.8" y="427.4" width="221.9" height="13.9" rx="7"/>
<path d="M264 440 Q281 441 282.4 452 L282.4 499 Q282.4 515.3 298 515.3 L435.6 515.3 Q451.2 515.3 451.2 499 L451.2 452 Q452.6 441 470 440 Z"/>
</g><g fill="#c9c9c2" stroke="#85887f" stroke-width="0.9"><circle cx="366.5" cy="459.9" r="10"/><circle cx="381.1" cy="470.5" r="10"/><circle cx="375.5" cy="487.6" r="10"/><circle cx="357.5" cy="487.6" r="10"/><circle cx="351.9" cy="470.5" r="10"/></g><circle cx="366.8" cy="473.8" r="5" fill="#0f4d3d"/><g><path d="M320 453 Q340.5 456 341.5 472.5 Q340.5 490 320.5 492.5 Q312 489 309.5 482 L313 477.5 L303 478 Q299.5 475 300.3 471 Q302 467.5 306 468.5 L313 469.5 Q309 465 309.5 460 Q315 459.5 320 463 Z" fill="#c9c9c2" stroke="#85887f" stroke-width="0.9"/><path d="M306 472.5 L338 472.5 M320 463 L326 472 M318 484 L326 473" stroke="#85887f" stroke-width="0.8" fill="none"/></g><g transform="translate(733,0) scale(-1,1)"><path d="M320 453 Q340.5 456 341.5 472.5 Q340.5 490 320.5 492.5 Q312 489 309.5 482 L313 477.5 L303 478 Q299.5 475 300.3 471 Q302 467.5 306 468.5 L313 469.5 Q309 465 309.5 460 Q315 459.5 320 463 Z" fill="#c9c9c2" stroke="#85887f" stroke-width="0.9"/><path d="M306 472.5 L338 472.5 M320 463 L326 472 M318 484 L326 473" stroke="#85887f" stroke-width="0.8" fill="none"/></g><circle cx="707.8" cy="199.8" r="14.3" fill="#fffef2" stroke="#f0b400" stroke-width="3.4"/>
<path d="M707.8 178 L710.5 197 L726.5 199.8 L710.5 202.6 L707.8 220.5 L705.1 202.6 L688 199.8 L705.1 197 Z" fill="#8e4c3c"/>
<text x="711" y="195" font-family="Liberation Serif" font-weight="bold" font-size="20.5" fill="#111" stroke="#111" stroke-width="0.5">N</text>
<rect x="703.5" y="246" width="9" height="82" fill="#f3c48e" stroke="#d58c58" stroke-width="1.2"/>
<rect x="706" y="248" width="4" height="78" fill="#fde9dc"/>
<circle cx="707.7" cy="238.2" r="9.8" fill="#fde9a8" stroke="#c5683a" stroke-width="1.2"/>
<circle cx="707.7" cy="238.2" r="8.4" fill="none" stroke="#fbe0d4" stroke-width="1"/>
<path d="M707.7 231 V245.5 M700.5 238.2 H715" stroke="#000" stroke-width="1.2"/>
<circle cx="707.7" cy="353" r="9.8" fill="#fde9a8" stroke="#c5683a" stroke-width="1.2"/>
<circle cx="707.7" cy="353" r="8.4" fill="none" stroke="#fbe0d4" stroke-width="1"/>
<path d="M700.5 353 H715" stroke="#000" stroke-width="1.2"/>
<rect x="696" y="328" width="23.5" height="14" fill="#a9ad70" stroke="#c5683a" stroke-width="1.2"/>
<rect x="697.5" y="329.5" width="20.5" height="11" fill="none" stroke="#f0c890" stroke-width="1"/>
</svg>
<div class="a" style="left:2px;top:53px;width:267px;height:37px;background:#fcfcfc;border-right:1px solid #a8a8a8;border-bottom:1px solid #c8c8c8;box-sizing:border-box;"></div>
<svg class="a" style="left:6px;top:57px;overflow:visible;" width="3" height="31" viewBox="0 0 3 31"><rect x="0.5" y="0.5" width="1.5" height="1.5" fill="#9a9a9a"/><rect x="0.5" y="4.5" width="1.5" height="1.5" fill="#9a9a9a"/><rect x="0.5" y="8.5" width="1.5" height="1.5" fill="#9a9a9a"/><rect x="0.5" y="12.5" width="1.5" height="1.5" fill="#9a9a9a"/><rect x="0.5" y="16.5" width="1.5" height="1.5" fill="#9a9a9a"/><rect x="0.5" y="20.5" width="1.5" height="1.5" fill="#9a9a9a"/><rect x="0.5" y="24.5" width="1.5" height="1.5" fill="#9a9a9a"/><rect x="0.5" y="28.5" width="1.5" height="1.5" fill="#9a9a9a"/></svg>
<div class="a" style="left:272px;top:53px;width:332px;height:37px;background:#fcfcfc;border-right:1px solid #a8a8a8;border-bottom:1px solid #c8c8c8;box-sizing:border-box;"></div>
<svg class="a" style="left:276px;top:57px;overflow:visible;" width="3" height="31" viewBox="0 0 3 31"><rect x="0.5" y="0.5" width="1.5" height="1.5" fill="#9a9a9a"/><rect x="0.5" y="4.5" width="1.5" height="1.5" fill="#9a9a9a"/><rect x="0.5" y="8.5" width="1.5" height="1.5" fill="#9a9a9a"/><rect x="0.5" y="12.5" width="1.5" height="1.5" fill="#9a9a9a"/><rect x="0.5" y="16.5" width="1.5" height="1.5" fill="#9a9a9a"/><rect x="0.5" y="20.5" width="1.5" height="1.5" fill="#9a9a9a"/><rect x="0.5" y="24.5" width="1.5" height="1.5" fill="#9a9a9a"/><rect x="0.5" y="28.5" width="1.5" height="1.5" fill="#9a9a9a"/></svg>
<div class="a" style="left:614px;top:53px;width:108px;height:37px;background:#fcfcfc;border-right:1px solid #a8a8a8;border-bottom:1px solid #c8c8c8;box-sizing:border-box;"></div>
<svg class="a" style="left:618px;top:57px;overflow:visible;" width="3" height="31" viewBox="0 0 3 31"><rect x="0.5" y="0.5" width="1.5" height="1.5" fill="#9a9a9a"/><rect x="0.5" y="4.5" width="1.5" height="1.5" fill="#9a9a9a"/><rect x="0.5" y="8.5" width="1.5" height="1.5" fill="#9a9a9a"/><rect x="0.5" y="12.5" width="1.5" height="1.5" fill="#9a9a9a"/><rect x="0.5" y="16.5" width="1.5" height="1.5" fill="#9a9a9a"/><rect x="0.5" y="20.5" width="1.5" height="1.5" fill="#9a9a9a"/><rect x="0.5" y="24.5" width="1.5" height="1.5" fill="#9a9a9a"/><rect x="0.5" y="28.5" width="1.5" height="1.5" fill="#9a9a9a"/></svg>
<div class="a" style="left:282px;top:56px;width:32px;height:31px;background:#cce4f7;border:1px solid #99c9ef;border-radius:3px;box-sizing:border-box;"></div>
<div class="a" style="left:442px;top:56px;width:32px;height:31px;background:#cce4f7;border:1px solid #99c9ef;border-radius:3px;box-sizing:border-box;"></div>
<svg class="a" style="left:17px;top:60px;overflow:visible;" width="22" height="24" viewBox="0 0 22 24"><rect x="1.5" y="2.5" width="16" height="19" fill="#ececec" stroke="#a0a0a0"/><circle cx="12.5" cy="7.5" r="6" fill="#fffaa0" opacity="0.9"/><path d="M12.5 3 L13.8 6.3 L17 6.5 L14.5 8.5 L15.5 12 L12.5 10 L9.5 12 L10.5 8.5 L8 6.5 L11.2 6.3 Z" fill="#fff" stroke="#e8d000" stroke-width="1"/></svg>
<svg class="a" style="left:46px;top:59px;overflow:visible;" width="26" height="26" viewBox="0 0 26 26"><path d="M1.5 8.5 L7 8.5 L9 10.5 L18 10.5 L18 24 L1.5 24 Z" fill="#f1d48a" stroke="#c89040"/><path d="M1.5 24 L6 14.5 L24.5 14.5 L20 24 Z" fill="#f5c860" stroke="#c89040"/><path d="M13 9 Q15 2 21 4 L21 1.5 L25 6 L20.5 9.5 L20.5 7 Q17 6 16 10 Z" fill="#2eaa2e"/></svg>
<svg class="a" style="left:80px;top:59px;overflow:visible;" width="22" height="25" viewBox="0 0 22 25"><rect x="1" y="1" width="20" height="23" rx="2" fill="#2a2a2a"/><rect x="4" y="2" width="14" height="9" fill="#e8eef6"/><path d="M5 5 H17 M5 8 H17" stroke="#b8c8e0"/><rect x="5" y="15" width="12" height="8" fill="#c8c8c8"/><rect x="7" y="17" width="3" height="5" fill="#2a2a2a"/></svg>
<svg class="a" style="left:111px;top:61px;overflow:visible;" width="24" height="23" viewBox="0 0 24 23"><rect x="9" y="1" width="6" height="6" rx="2" fill="#a8c8e8" stroke="#6890c0"/><path d="M2 11 Q2 7 6 7 L18 7 Q22 7 22 11 L22 18 L2 18 Z" fill="#e4e4e4" stroke="#909090"/><rect x="5" y="15" width="14" height="6" fill="#f8f8f8" stroke="#909090"/><path d="M4 12 H20" stroke="#b0b0b0"/></svg>
<svg class="a" style="left:143px;top:62px;overflow:visible;" width="23" height="22" viewBox="0 0 23 22"><path d="M1.5 1.5 H9 L12 4.5 V14.5 H1.5 Z" fill="#f4f8ff" stroke="#2f5fb0"/><path d="M3 5 H9 M3 7.5 H10 M3 10 H10" stroke="#3a6ac0"/><path d="M9.5 7.5 H17 L20.5 11 V21 H9.5 Z" fill="#f4f8ff" stroke="#2f5fb0"/><path d="M11 12 H18 M11 14.5 H19 M11 17 H19" stroke="#3a6ac0"/></svg>
<svg class="a" style="left:175px;top:61px;overflow:visible;" width="24" height="23" viewBox="0 0 24 23"><rect x="1.5" y="3.5" width="17" height="17" rx="2" fill="#e8b830" stroke="#a07818"/><rect x="6" y="1" width="8" height="5" rx="1" fill="#f0e0a0" stroke="#a07818"/><path d="M10.5 10.5 H19 L22.5 14 V22.5 H10.5 Z" fill="#f4f4f4" stroke="#7080a0"/><path d="M12 15 H20 M12 17.5 H21 M12 20 H21" stroke="#8090b0"/></svg>
<svg class="a" style="left:208px;top:58px;overflow:visible;" width="23" height="28" viewBox="0 0 23 28"><rect x="10" y="2" width="1.5" height="24" fill="#e02020"/><rect x="11.5" y="2" width="1.5" height="24" fill="#f0c000"/><rect x="13" y="2" width="1.5" height="24" fill="#10a0a0"/><rect x="14.5" y="2" width="1.5" height="24" fill="#20a020"/><path d="M4 7 Q18 6 20 12 Q18 17 14 18" fill="none" stroke="#000" stroke-width="1.8"/><path d="M1 7 L7 2.5 L7 11.5 Z" fill="#000"/><path d="M3 23 Q8 21 13 21" fill="none" stroke="#000" stroke-width="1.8"/></svg>
<svg class="a" style="left:240px;top:58px;overflow:visible;" width="23" height="28" viewBox="0 0 23 28"><rect x="9" y="2" width="5" height="24" fill="#b8b8b8" stroke="#909090" stroke-width="0.6"/><path d="M19 7 Q5 6 3 12 Q5 17 9 18" fill="none" stroke="#9a9a9a" stroke-width="1.8"/><path d="M22 7 L16 2.5 L16 11.5 Z" fill="#9a9a9a"/><path d="M20 23 Q15 21 10 21" fill="none" stroke="#9a9a9a" stroke-width="1.8"/></svg>
<svg class="a" style="left:284px;top:60px;overflow:visible;" width="28" height="24" viewBox="0 0 28 24"><text x="3" y="19" font-family="Liberation Sans" font-weight="bold" font-size="19" fill="#bdbdbd" textLength="22" lengthAdjust="spacingAndGlyphs">3D</text><text x="1.5" y="17.5" font-family="Liberation Sans" font-weight="bold" font-size="19" fill="#000" textLength="22" lengthAdjust="spacingAndGlyphs">3D</text></svg>
<svg class="a" style="left:318px;top:62px;overflow:visible;" width="25" height="22" viewBox="0 0 25 22"><rect x="0" y="0" width="24" height="21" fill="#000"/><rect x="1" y="8" width="4" height="13" fill="#1010f0"/><rect x="7" y="12" width="4" height="9" fill="#10c010"/><rect x="13" y="8" width="4" height="13" fill="#f0f000"/><rect x="19" y="2" width="4" height="19" fill="#f01010"/></svg>
<svg class="a" style="left:350px;top:61px;overflow:visible;" width="25" height="24" viewBox="0 0 25 24"><path d="M12 13 L21.5 22.5" stroke="#9a6a38" stroke-width="2.6"/><circle cx="8.5" cy="8.5" r="6.5" fill="#f4f4f4" stroke="#a8a8a8" stroke-width="1.6"/><path d="M5 7 Q6 4.5 9 4.5" stroke="#fff" stroke-width="1.5" fill="none"/></svg>
<svg class="a" style="left:381px;top:60px;overflow:visible;" width="26" height="25" viewBox="0 0 26 25"><path d="M2 11 L14 23 L22 23 Z" fill="#9c9c9c" opacity="0.75"/><path d="M8 1.5 L24 17.5 L19 22.5 L3 6.5 Z" fill="#fff5c0" stroke="#111" stroke-width="1.4"/><path d="M6 8.5 L20 22.5" stroke="#e0b020" stroke-width="1.6"/><path d="M10 5 L12 7 M13 8 L15 10 M16 11 L18 13 M19 14 L21 16" stroke="#111" stroke-width="1"/></svg>
<svg class="a" style="left:413px;top:59px;overflow:visible;" width="27" height="27" viewBox="0 0 27 27"><path d="M1 17 Q13 7 25 15" fill="none" stroke="#1020e0" stroke-width="1.3"/><path d="M11.5 1 L11.5 17 L13 20 L14.5 17 L14.5 1 Z" fill="#fff" stroke="#707070" stroke-width="0.9"/><rect x="12.5" y="4" width="1" height="6" fill="#707070"/><rect x="10" y="20" width="2" height="5" fill="#8a1010"/><rect x="13.5" y="20" width="2" height="5" fill="#8a1010"/><path d="M3 22.5 L7 19.5 L7 25.5 Z M24 22.5 L20 19.5 L20 25.5 Z" fill="#108010"/></svg>
<svg class="a" style="left:446px;top:60px;overflow:visible;" width="24" height="24" viewBox="0 0 24 24"><path d="M3 9 L11 7 L16 22 L9 23 Z" fill="#9c9c9c" opacity="0.8"/><path d="M8 2 L20 15 L15 15.5 L12 22 Z" fill="#e8dccb" stroke="#a06060" stroke-width="1"/></svg>
<svg class="a" style="left:477px;top:59px;overflow:visible;" width="25" height="26" viewBox="0 0 25 26"><rect x="4" y="6" width="20" height="19" fill="#222"/><rect x="1.5" y="3.5" width="19" height="19" fill="#f8f000" stroke="#333" stroke-width="1"/><rect x="2" y="1" width="5" height="3" fill="#fff" stroke="#444" stroke-width="0.8"/><path d="M4 8 H7 M4 10.5 H7 M4 13 H7 M4 15.5 H7 M4 18 H7" stroke="#111" stroke-width="1"/><rect x="10" y="7.5" width="8" height="5" fill="#f01818"/><rect x="10" y="13.5" width="8" height="5" fill="#108a20"/></svg>
<svg class="a" style="left:511px;top:58px;overflow:visible;" width="19" height="28" viewBox="0 0 19 28"><path d="M2 1 L2 21 L4 26 L6 21 L6 1 Z" fill="#fff" stroke="#707070" stroke-width="0.9"/><text x="8" y="10" font-family="Liberation Sans" font-weight="bold" font-size="9" fill="#1010e0">A</text><text x="8" y="18" font-family="Liberation Sans" font-weight="bold" font-size="9" fill="#e01010">B</text><text x="8" y="26" font-family="Liberation Sans" font-weight="bold" font-size="9" fill="#107010">C</text></svg>
<svg class="a" style="left:541px;top:58px;overflow:visible;" width="26" height="28" viewBox="0 0 26 28"><path d="M1 5.5 H25" stroke="#1010e0" stroke-width="1.4"/><path d="M6 11 L13 10 L14 24 L9 25 Z" fill="#9c9c9c" opacity="0.8"/><path d="M11 6 L24 20 L13 23 Z" fill="#e8dccb" stroke="#a06060" stroke-width="1"/><circle cx="10" cy="5.5" r="2.3" fill="#fff" stroke="#000" stroke-width="1.4"/></svg>
<svg class="a" style="left:573px;top:58px;overflow:visible;" width="27" height="27" viewBox="0 0 27 27"><path d="M3 13 Q5 4 13 2 L22 2" fill="none" stroke="#707070" stroke-width="1"/><path d="M3 13 L3 24 L11 24 M11 24 L11 13 L3 13 M11 13 L13 2 L22 2 L22 10 L11 13 M3 24 L11 13 M13 2 L22 10" fill="none" stroke="#c02020" stroke-width="0.9"/><path d="M13 8 L25 22 L14 25 Z" fill="#e8dccb" stroke="#a06060" stroke-width="1"/><g fill="#1040e0"><rect x="1.5" y="11.5" width="3" height="3"/><rect x="1.5" y="22.5" width="3" height="3"/><rect x="9.5" y="22.5" width="3" height="3"/><rect x="9.5" y="11.5" width="3" height="3"/><rect x="11.5" y="0.5" width="3" height="3"/><rect x="20.5" y="0.5" width="3" height="3"/><rect x="20.5" y="8.5" width="3" height="3"/></g></svg>
<svg class="a" style="left:627px;top:59px;overflow:visible;" width="26" height="25" viewBox="0 0 26 25"><defs><radialGradient id="gg" cx="0.4" cy="0.35" r="0.7"><stop offset="0" stop-color="#fafafa"/><stop offset="1" stop-color="#b8b8b8"/></radialGradient></defs><path d="M20.50 10.00L20.38 11.56L18.68 12.66L18.16 13.90L18.59 15.88L17.57 17.07L15.55 16.96L14.40 17.66L13.59 19.51L12.06 19.88L10.50 18.60L9.15 18.49L7.41 19.51L5.96 18.91L5.45 16.96L4.42 16.08L2.41 15.88L1.59 14.54L2.32 12.66L2.01 11.35L0.50 10.00L0.62 8.44L2.32 7.34L2.84 6.10L2.41 4.12L3.43 2.93L5.45 3.04L6.60 2.34L7.41 0.49L8.94 0.12L10.50 1.40L11.85 1.51L13.59 0.49L15.04 1.09L15.55 3.04L16.58 3.92L18.59 4.12L19.41 5.46L18.68 7.34L18.99 8.65Z" fill="url(#gg)" stroke="#555" stroke-width="0.9"/><circle cx="10.8" cy="11.5" r="2.6" fill="#c81010"/><path d="M15.5 10.5 H21 V16 H24.5 L18.25 23 L12 16 H15.5 Z" fill="#d84040" stroke="#a02020" stroke-width="0.7"/></svg>
<svg class="a" style="left:660px;top:61px;overflow:visible;" width="24" height="21" viewBox="0 0 24 21"><path d="M8 0.8 L15.2 0.8 L23 19.5 L17.6 19.5 L16 15 L7.2 15 L5.6 19.5 L0.5 19.5 Z M8.6 11 L14.6 11 L11.6 3.8 Z" fill="#9bb3e3" fill-rule="evenodd" stroke="#6a88c8" stroke-width="1.1"/></svg>
<svg class="a" style="left:695px;top:58px;overflow:visible;" width="22" height="27" viewBox="0 0 22 27"><defs><linearGradient id="pg" x1="0" y1="0" x2="1" y2="1"><stop offset="0" stop-color="#9090f8"/><stop offset="1" stop-color="#2020c0"/></linearGradient></defs><path d="M-1.5 5 Q-1.5 3.5 0 3.5 H7.5 L9.5 5.5 V18 H-1.5 Z" fill="url(#pg)" stroke="#1010a0" stroke-width="0.8"/><path d="M1.8 9.5 Q1.8 8 3.3 8 H11.5 Q12.5 8 12.5 9.5 V21.5 H1.8 Z" fill="url(#pg)" stroke="#1010a0" stroke-width="0.8"/><path d="M16 1 V20 L17.5 26 L19 20 V1 Z" fill="#fff" stroke="#555" stroke-width="0.9"/><path d="M17.5 5 V14" stroke="#777" stroke-width="0.8"/><path d="M0 25 H15" stroke="#111" stroke-width="1.6" stroke-dasharray="2 1.3"/></svg>
<div class="a" style="left:3px;top:99px;width:52px;height:37px;border:1px solid #a0a0a0;box-shadow:inset 1px 1px 0 #fff;box-sizing:border-box;"></div>
<svg class="a" style="left:9px;top:102px;overflow:visible;" width="13" height="13" viewBox="0 0 13 13"><circle cx="6.5" cy="6.5" r="5.3" fill="#fff" stroke="#8a8a8a" stroke-width="1.2"/><path d="M2 9 A5.3 5.3 0 0 1 9 2" fill="none" stroke="#555" stroke-width="1.2"/><circle cx="6.5" cy="6.5" r="2.1" fill="#000"/></svg>
<svg class="a" style="left:9px;top:121px;overflow:visible;" width="13" height="13" viewBox="0 0 13 13"><circle cx="6.5" cy="6.5" r="5.3" fill="#fff" stroke="#8a8a8a" stroke-width="1.2"/><path d="M2 9 A5.3 5.3 0 0 1 9 2" fill="none" stroke="#555" stroke-width="1.2"/></svg>
<div class="t" style="left:27px;top:102.77px;font-size:11.5px;color:#000;font-weight:normal;letter-spacing:-1px;">mm</div>
<div class="t" style="left:26px;top:120.84px;font-size:12px;color:#000;font-weight:normal;letter-spacing:-0.6px;">inch</div>
<svg class="a" style="left:59px;top:102px;overflow:visible;" width="15" height="13" viewBox="0 0 15 13"><path d="M1 1 V12 M14 1 V12" stroke="#333a8a" stroke-width="1"/><path d="M2 6.5 H13" stroke="#000" stroke-width="1.6"/><path d="M2 6.5 L6 3 L6 10 Z M13 6.5 L9 3 L9 10 Z" fill="#000"/></svg>
<svg class="a" style="left:59px;top:121px;overflow:visible;" width="15" height="14" viewBox="0 0 15 14"><path d="M1 1 H14 M1 13 H14" stroke="#333a8a" stroke-width="1"/><path d="M7.5 2 V12" stroke="#000" stroke-width="1.6"/><path d="M7.5 2 L4 6 L11 6 Z M7.5 12 L4 8 L11 8 Z" fill="#000"/></svg>
<div class="a" style="left:78px;top:99px;width:59px;height:18px;background:#fff;border-top:2px solid #828282;border-left:2px solid #828282;border-bottom:1px solid #f8f8f8;border-right:1px solid #f8f8f8;box-sizing:border-box;"></div>
<div class="a" style="left:78px;top:120px;width:59px;height:18px;background:#fff;border-top:2px solid #828282;border-left:2px solid #828282;border-bottom:1px solid #f8f8f8;border-right:1px solid #f8f8f8;box-sizing:border-box;"></div>
<div class="a" style="left:141px;top:99px;width:54px;height:18px;background:#fff;border-top:2px solid #828282;border-left:2px solid #828282;border-bottom:1px solid #f8f8f8;border-right:1px solid #f8f8f8;box-sizing:border-box;"></div>
<div class="a" style="left:141px;top:120px;width:54px;height:18px;background:#fff;border-top:2px solid #828282;border-left:2px solid #828282;border-bottom:1px solid #f8f8f8;border-right:1px solid #f8f8f8;box-sizing:border-box;"></div>
<div class="t" style="left:147px;top:101.92px;font-size:12.5px;color:#000;font-weight:normal;">0.0%</div>
<div class="t" style="left:147px;top:122.92px;font-size:12.5px;color:#000;font-weight:normal;">0.0%</div>
<div class="a" style="left:198px;top:109px;width:21px;height:20px;background:#f0f0f0;border-top:1px solid #fff;border-left:1px solid #fff;border-bottom:2px solid #7a7a7a;border-right:2px solid #7a7a7a;box-sizing:border-box;"></div>
<svg class="a" style="left:202px;top:112px;overflow:visible;" width="12" height="14" viewBox="0 0 12 14"><rect x="1" y="4" width="10" height="9" rx="1" fill="#d8d8e8" stroke="#333" stroke-width="1"/><path d="M3 4 V2.5 Q3 1 6 1 Q9 1 9 2.5 V4" fill="none" stroke="#333" stroke-width="1.2"/><path d="M2 7 H10 M2 10 H10" stroke="#9090a8"/></svg>
<div class="a" style="left:231px;top:95px;width:24px;height:22px;background:#f0f0f0;border-top:1px solid #fff;border-left:1px solid #fff;border-bottom:2px solid #7a7a7a;border-right:2px solid #7a7a7a;box-sizing:border-box;"></div>
<div class="a" style="left:254px;top:95px;width:25px;height:22px;background:#f0f0f0;border-top:1px solid #fff;border-left:1px solid #fff;border-bottom:2px solid #7a7a7a;border-right:2px solid #7a7a7a;box-sizing:border-box;"></div>
<svg class="a" style="left:234px;top:97px;overflow:visible;" width="20" height="18" viewBox="0 0 20 18"><path d="M4 7 Q13 3 14 10 Q14 14 10 16" fill="none" stroke="#000" stroke-width="1.3"/><path d="M1 6 L8 1 L8 11 Z" fill="#0d2fe0"/></svg>
<svg class="a" style="left:257px;top:97px;overflow:visible;" width="20" height="18" viewBox="0 0 20 18"><path d="M15 7 Q6 3 5 10 Q5 14 9 16" fill="none" stroke="#000" stroke-width="1.3"/><path d="M18 6 L11 1 L11 11 Z" fill="#0d2fe0"/></svg>
<div class="a" style="left:231px;top:120px;width:48px;height:19px;background:#fff;border-top:2px solid #828282;border-left:2px solid #828282;border-bottom:1px solid #f8f8f8;border-right:1px solid #f8f8f8;box-sizing:border-box;"></div>
<div class="t" style="left:236px;top:122.92px;font-size:12.5px;color:#000;font-weight:normal;">0.0°</div>
<div class="a" style="left:294px;top:95px;width:24px;height:22px;background:#f0f0f0;border-top:1px solid #fff;border-left:1px solid #fff;border-bottom:2px solid #7a7a7a;border-right:2px solid #7a7a7a;box-sizing:border-box;"></div>
<div class="a" style="left:294px;top:118px;width:24px;height:22px;background:#f0f0f0;border-top:1px solid #fff;border-left:1px solid #fff;border-bottom:2px solid #7a7a7a;border-right:2px solid #7a7a7a;box-sizing:border-box;"></div>
<div class="a" style="left:318px;top:95px;width:24px;height:22px;background:#f0f0f0;border-top:1px solid #fff;border-left:1px solid #fff;border-bottom:2px solid #7a7a7a;border-right:2px solid #7a7a7a;box-sizing:border-box;"></div>
<div class="a" style="left:318px;top:118px;width:24px;height:22px;background:#f0f0f0;border-top:1px solid #fff;border-left:1px solid #fff;border-bottom:2px solid #7a7a7a;border-right:2px solid #7a7a7a;box-sizing:border-box;"></div>
<div class="a" style="left:342px;top:95px;width:24px;height:22px;background:#f0f0f0;border-top:1px solid #fff;border-left:1px solid #fff;border-bottom:2px solid #7a7a7a;border-right:2px solid #7a7a7a;box-sizing:border-box;"></div>
<div class="a" style="left:342px;top:118px;width:24px;height:22px;background:#f0f0f0;border-top:1px solid #fff;border-left:1px solid #fff;border-bottom:2px solid #7a7a7a;border-right:2px solid #7a7a7a;box-sizing:border-box;"></div>
<svg class="a" style="left:299px;top:100px;overflow:visible;" width="14" height="13" viewBox="0 0 14 13"><rect x="0.5" y="0.5" width="13" height="12" fill="#efe8d8" stroke="#000"/><rect x="0.5" y="0.5" width="13" height="5" fill="#000"/></svg>
<svg class="a" style="left:299px;top:122px;overflow:visible;" width="14" height="14" viewBox="0 0 14 14"><rect x="0.5" y="0.5" width="13" height="13" fill="#efe8d8" stroke="#000"/><rect x="0.5" y="0.5" width="6" height="13" fill="#000"/></svg>
<svg class="a" style="left:322px;top:97px;overflow:visible;" width="15" height="16" viewBox="0 0 15 16"><g fill="#0000ff"><path d="M3.2 0 H11.2 L7.2 6 Z M3.2 15 H11.2 L7.2 9 Z M0 3 V12 L5.5 7.5 Z M14.3 3 V12 L8.8 7.5 Z"/><rect x="4.3" y="5" width="5.8" height="5"/></g><rect x="5.6" y="6.4" width="3.2" height="2.3" fill="#fffff0"/></svg>
<svg class="a" style="left:346px;top:98px;overflow:visible;" width="16" height="16" viewBox="0 0 16 16"><rect x="0.5" y="0.5" width="15" height="15" fill="#fff" stroke="#0a28e8" stroke-width="1.2"/><circle cx="8" cy="8" r="4.5" fill="none" stroke="#0a28e8" stroke-width="1.3"/><path d="M8 2 V14 M2 8 H14" stroke="#0a28e8" stroke-width="1.3"/><path d="M8 1.5 L6 4 H10 Z M8 14.5 L6 12 H10 Z M1.5 8 L4 6 V10 Z M14.5 8 L12 6 V10 Z" fill="#0a28e8"/></svg>
<svg class="a" style="left:322px;top:121px;overflow:visible;" width="16" height="15" viewBox="0 0 16 15"><g fill="#0a28e8"><rect x="1" y="1" width="2" height="2"/><rect x="1" y="6" width="2" height="2"/><rect x="1" y="11" width="2" height="2"/><rect x="5" y="1" width="10" height="1.5"/><rect x="5" y="6" width="10" height="1.5"/><rect x="5" y="11" width="10" height="1.5"/></g></svg>
<svg class="a" style="left:345px;top:119px;overflow:visible;" width="19" height="19" viewBox="0 0 19 19"><path d="M1 2 H6 M9 2 H13 M15 2 H18" stroke="#e01010" stroke-width="1.6"/><path d="M4 5 L15 15 M15 5 L4 15" stroke="#555" stroke-width="1.2"/><circle cx="5" cy="15" r="2.5" fill="none" stroke="#555" stroke-width="1.1"/><circle cx="14" cy="15" r="2.5" fill="none" stroke="#555" stroke-width="1.1"/></svg>
<div class="a" style="left:378px;top:95px;width:24px;height:45px;background:#f0f0f0;border-top:1px solid #fff;border-left:1px solid #fff;border-bottom:2px solid #7a7a7a;border-right:2px solid #7a7a7a;box-sizing:border-box;"></div>
<div class="a" style="left:405px;top:95px;width:25px;height:45px;background:#f0f0f0;border-top:1px solid #fff;border-left:1px solid #fff;border-bottom:2px solid #7a7a7a;border-right:2px solid #7a7a7a;box-sizing:border-box;"></div>
<svg class="a" style="left:380px;top:97px;overflow:visible;" width="20" height="42" viewBox="0 0 20 42"><rect x="1.5" y="10.5" width="15" height="26" rx="1" fill="#ececec" stroke="#333" stroke-width="1"/><rect x="16" y="20" width="1.6" height="7" fill="#222"/><path d="M6.5 1.5 H16.5 V8 H13 L11.5 10.5 L11 8 H6.5 Z" fill="#ffff00" stroke="#333" stroke-width="0.9"/><path d="M8.5 4 H14.5 M8.5 6 H14.5" stroke="#444" stroke-width="0.8"/><path d="M4 17.5 Q4 12.5 9.5 12.5 Q15 12.5 15 17.5 Q15 21.5 11 23.5 Q9.5 24.5 9.5 27 V29" fill="none" stroke="#ff0000" stroke-width="2.8"/><circle cx="4.6" cy="18.3" r="1.9" fill="#ff0000"/><circle cx="9.6" cy="33" r="1.9" fill="#ff0000"/></svg>
<svg class="a" style="left:406px;top:97px;overflow:visible;" width="20" height="42" viewBox="0 0 20 42"><path d="M4.5 1 L7.5 4 V29" fill="none" stroke="#444" stroke-width="1.2"/><path d="M4.5 1 L6.5 3" stroke="#222" stroke-width="2.4"/><path d="M2 8 H7 V27 H5 L3.5 20 Q2 14 2 8 Z M8 8 H13.5 Q13.5 14 12 20 L10 27 H8 Z" fill="#3636d8"/><path d="M2.5 9.5 H7 M8 9.5 H13" stroke="#b8b8e8" stroke-width="0.8"/><rect x="2" y="29" width="14" height="3" fill="#ff2020"/><rect x="7.5" y="29.7" width="2.5" height="1.6" fill="#fff"/><rect x="0.5" y="33" width="17" height="2.8" fill="#ff2020"/><rect x="0.5" y="35.8" width="17" height="2.2" fill="#444"/></svg>
<div class="a" style="left:444px;top:97px;width:18px;height:19px;background:#efe9d9;border-top:1px solid #fff;border-left:1px solid #fff;border-bottom:2px solid #7a7a7a;border-right:2px solid #7a7a7a;box-sizing:border-box;"></div>
<div class="a" style="left:462px;top:97px;width:18px;height:19px;background:#efe9d9;border-top:2px solid #7a7a7a;border-left:2px solid #7a7a7a;border-bottom:1px solid #fff;border-right:1px solid #fff;box-sizing:border-box;"></div>
<div class="a" style="left:480px;top:97px;width:18px;height:19px;background:#efe9d9;border-top:1px solid #fff;border-left:1px solid #fff;border-bottom:2px solid #7a7a7a;border-right:2px solid #7a7a7a;box-sizing:border-box;"></div>
<div class="a" style="left:444px;top:120px;width:18px;height:19px;background:#efe9d9;border-top:1px solid #fff;border-left:1px solid #fff;border-bottom:2px solid #7a7a7a;border-right:2px solid #7a7a7a;box-sizing:border-box;"></div>
<div class="a" style="left:462px;top:120px;width:18px;height:19px;background:#efe9d9;border-top:2px solid #7a7a7a;border-left:2px solid #7a7a7a;border-bottom:1px solid #fff;border-right:1px solid #fff;box-sizing:border-box;"></div>
<div class="a" style="left:480px;top:120px;width:18px;height:19px;background:#efe9d9;border-top:1px solid #fff;border-left:1px solid #fff;border-bottom:2px solid #7a7a7a;border-right:2px solid #7a7a7a;box-sizing:border-box;"></div>
<svg class="a" style="left:446px;top:99px;overflow:visible;" width="14" height="14" viewBox="0 0 14 14"><path d="M2 2 V12 M2 7 H12 M2 7 L6 3 M2 7 L6 11" stroke="#000" stroke-width="1.3" fill="none"/></svg>
<svg class="a" style="left:464px;top:99px;overflow:visible;" width="14" height="15" viewBox="0 0 14 15"><path d="M7 1 V14 M1 7.5 H13 M2.5 3 L11.5 12 M11.5 3 L2.5 12" stroke="#000" stroke-width="1.2" fill="none"/></svg>
<svg class="a" style="left:481px;top:99px;overflow:visible;" width="14" height="14" viewBox="0 0 14 14"><path d="M12 2 V12 M2 7 H12 M12 7 L8 3 M12 7 L8 11" stroke="#000" stroke-width="1.3" fill="none"/></svg>
<svg class="a" style="left:446px;top:122px;overflow:visible;" width="14" height="14" viewBox="0 0 14 14"><path d="M2 2 H12 M7 2 V12 M7 2 L3 6 M7 2 L11 6" stroke="#000" stroke-width="1.3" fill="none"/></svg>
<svg class="a" style="left:464px;top:122px;overflow:visible;" width="14" height="15" viewBox="0 0 14 15"><path d="M7 1 V14 M1 7.5 H13 M2.5 3 L11.5 12 M11.5 3 L2.5 12" stroke="#000" stroke-width="1.2" fill="none"/></svg>
<svg class="a" style="left:481px;top:122px;overflow:visible;" width="14" height="14" viewBox="0 0 14 14"><path d="M2 12 H12 M7 2 V12 M7 12 L3 8 M7 12 L11 8" stroke="#000" stroke-width="1.3" fill="none"/></svg>
<div class="a" style="left:501px;top:97px;width:59px;height:20px;background:#fff;border-top:2px solid #828282;border-left:2px solid #828282;border-bottom:1px solid #f8f8f8;border-right:1px solid #f8f8f8;box-sizing:border-box;"></div>
<div class="a" style="left:501px;top:119px;width:59px;height:20px;background:#fff;border-top:2px solid #828282;border-left:2px solid #828282;border-bottom:1px solid #f8f8f8;border-right:1px solid #f8f8f8;box-sizing:border-box;"></div>
<div class="a" style="left:753px;top:145px;width:284px;height:600px;background:#f0f0f0;"></div>
<div class="a" style="left:1036px;top:145px;width:1px;height:600px;background:#a9a9a9;"></div>
<div class="a" style="left:753px;top:145px;width:283px;height:27px;background:linear-gradient(#c2d2e2,#d9e4ef);"></div>
<div class="t" style="left:757px;top:152.65px;font-size:14px;color:#101010;font-weight:normal;">Objects</div>
<svg class="a" style="left:1004px;top:154px;overflow:visible;" width="9" height="12" viewBox="0 0 9 12"><rect x="2" y="1" width="5" height="6" fill="none" stroke="#000" stroke-width="1.6"/><rect x="0" y="7" width="9" height="1.6" fill="#000"/><rect x="3.8" y="8" width="1.5" height="4" fill="#000"/></svg>
<div class="a" style="left:1021px;top:153px;width:12px;height:12px;background:#c84646;"></div><svg class="a" style="left:1021px;top:153px;overflow:visible;" width="12" height="12" viewBox="0 0 12 12"><path d="M3.5 3.5 L8.5 8.5 M8.5 3.5 L3.5 8.5" stroke="#fff" stroke-width="1.6"/></svg>
<div class="a" style="left:753px;top:172px;width:283px;height:28px;background:#fff;"></div>
<svg class="a" style="left:759px;top:179px;overflow:visible;" width="17" height="17" viewBox="0 0 17 17"><rect x="0.5" y="0.5" width="6.5" height="6.5" rx="1" fill="#fff" stroke="#4a94dc" stroke-width="1"/><path d="M3.75 1.75V5.75M1.75 3.75H5.75" stroke="#000" stroke-width="1.4"/><rect x="0.5" y="9.5" width="6.5" height="6.5" rx="1" fill="#fff" stroke="#4a94dc" stroke-width="1"/><path d="M3.75 10.75V14.75M1.75 12.75H5.75" stroke="#000" stroke-width="1.4"/><rect x="9.5" y="4.5" width="6.5" height="6.5" rx="1" fill="#fff" stroke="#4a94dc" stroke-width="1"/><path d="M12.75 5.75V9.75M10.75 7.75H14.75" stroke="#000" stroke-width="1.4"/><path d="M8 2.5H12M8 13.5H12" stroke="#555" stroke-width="1"/></svg>
<svg class="a" style="left:783px;top:179px;overflow:visible;" width="17" height="17" viewBox="0 0 17 17"><rect x="0.5" y="0.5" width="6.5" height="6.5" rx="1" fill="#000" stroke="#4a94dc" stroke-width="1"/><path d="M3.75 1.75V5.75M1.75 3.75H5.75" stroke="#fff" stroke-width="1.4"/><rect x="0.5" y="9.5" width="6.5" height="6.5" rx="1" fill="#000" stroke="#4a94dc" stroke-width="1"/><path d="M3.75 10.75V14.75M1.75 12.75H5.75" stroke="#fff" stroke-width="1.4"/><rect x="9.5" y="4.5" width="6.5" height="6.5" rx="1" fill="#000" stroke="#4a94dc" stroke-width="1"/><path d="M12.75 5.75V9.75M10.75 7.75H14.75" stroke="#fff" stroke-width="1.4"/><path d="M8 2.5H12M8 13.5H12" stroke="#555" stroke-width="1"/></svg>
<svg class="a" style="left:807px;top:179px;overflow:visible;" width="15" height="18" viewBox="0 0 15 18"><path d="M3 8 V5 Q3 1 7.5 1 Q12 1 12 5 V8" fill="none" stroke="#8a8a8a" stroke-width="2.4"/><path d="M3 8 V5 Q3 1 7.5 1 Q12 1 12 5 V8" fill="none" stroke="#fafafa" stroke-width="0.8"/><rect x="0.8" y="7.8" width="13.4" height="9" fill="#f2b62a" stroke="#e47a1c" stroke-width="1.1"/><rect x="1.6" y="8.5" width="11.8" height="3" fill="#f8d860"/></svg>
<svg class="a" style="left:831px;top:179px;overflow:visible;" width="15" height="18" viewBox="0 0 15 18"><path d="M3 8 V5 Q3 1 7.5 1 Q12 1 12 5 V8" fill="none" stroke="#8a8a8a" stroke-width="2.4"/><path d="M3 8 V5 Q3 1 7.5 1 Q12 1 12 5 V8" fill="none" stroke="#fafafa" stroke-width="0.8"/><rect x="0.8" y="7.8" width="13.4" height="9" fill="#f4f6fa" stroke="#000" stroke-width="1.2"/><path d="M1 8 L14 16.5 M14 8 L1 16.5" stroke="#000" stroke-width="1"/></svg>
<svg class="a" style="left:856px;top:179px;overflow:visible;" width="15" height="18" viewBox="0 0 15 18"><path d="M3 8 V5 Q3 1 7.5 1 Q12 1 12 5 V6" fill="none" stroke="#8a8a8a" stroke-width="2.4"/><path d="M3 8 V5 Q3 1 7.5 1 Q12 1 12 5 V6" fill="none" stroke="#fafafa" stroke-width="0.8"/><rect x="0.8" y="7.8" width="13.4" height="9" fill="#f2b62a" stroke="#e47a1c" stroke-width="1.1"/><rect x="1.6" y="8.5" width="11.8" height="3" fill="#f8d860"/></svg>
<div class="a" style="left:753px;top:200px;width:283px;height:243px;background:#fff;border-top:2px solid #777;border-left:2px solid #777;border-right:1px solid #e6e6e6;border-bottom:1px solid #e6e6e6;box-sizing:border-box;"></div>
<svg class="a" style="left:771px;top:227px;overflow:visible;" width="2" height="196" viewBox="0 0 2 196"><path d="M1 0 V195" stroke="#666" stroke-width="1" stroke-dasharray="1 2"/></svg>
<svg class="a" style="left:763px;top:210px;overflow:visible;" width="17" height="17" viewBox="0 0 17 17"><rect x="0.5" y="0.5" width="16" height="16" fill="#fff" stroke="#7a7a7a"/><path d="M8.5 3 V14 M3 8.5 H14" stroke="#000" stroke-width="3.2"/><path d="M8.5 4 V13 M4 8.5 H13" stroke="#fff" stroke-width="1.2"/></svg>
<svg class="a" style="left:763px;top:246px;overflow:visible;" width="17" height="17" viewBox="0 0 17 17"><rect x="0.5" y="0.5" width="16" height="16" fill="#fff" stroke="#7a7a7a"/><rect x="3" y="7" width="11" height="3.2" fill="#000"/><rect x="4" y="8" width="9" height="1.2" fill="#fff"/></svg>
<svg class="a" style="left:763px;top:348px;overflow:visible;" width="17" height="17" viewBox="0 0 17 17"><rect x="0.5" y="0.5" width="16" height="16" fill="#fff" stroke="#7a7a7a"/><rect x="3" y="7" width="11" height="3.2" fill="#000"/><rect x="4" y="8" width="9" height="1.2" fill="#fff"/></svg>
<div class="t" style="left:783px;top:213.15px;font-size:14px;color:#111;font-weight:normal;">1</div>
<div class="t" style="left:783px;top:247.15px;font-size:14px;color:#111;font-weight:normal;">2</div>
<div class="t" style="left:783px;top:281.15px;font-size:14px;color:#111;font-weight:normal;">2:1</div>
<div class="t" style="left:783px;top:315.15px;font-size:14px;color:#111;font-weight:normal;">3</div>
<div class="t" style="left:783px;top:349.15px;font-size:14px;color:#111;font-weight:normal;">4</div>
<div class="t" style="left:783px;top:383.15px;font-size:14px;color:#111;font-weight:normal;">4:1</div>
<div class="t" style="left:783px;top:417.15px;font-size:14px;color:#111;font-weight:normal;">5</div>
<svg class="a" style="left:793px;top:218px;overflow:visible;" width="19" height="2" viewBox="0 0 19 2"><path d="M0 0.5 H19" stroke="#666" stroke-dasharray="1 2"/></svg>
<svg class="a" style="left:793px;top:253px;overflow:visible;" width="19" height="2" viewBox="0 0 19 2"><path d="M0 0.5 H19" stroke="#666" stroke-dasharray="1 2"/></svg>
<svg class="a" style="left:793px;top:321px;overflow:visible;" width="19" height="2" viewBox="0 0 19 2"><path d="M0 0.5 H19" stroke="#666" stroke-dasharray="1 2"/></svg>
<svg class="a" style="left:793px;top:355px;overflow:visible;" width="19" height="2" viewBox="0 0 19 2"><path d="M0 0.5 H19" stroke="#666" stroke-dasharray="1 2"/></svg>
<svg class="a" style="left:793px;top:423px;overflow:visible;" width="19" height="2" viewBox="0 0 19 2"><path d="M0 0.5 H19" stroke="#666" stroke-dasharray="1 2"/></svg>
<svg class="a" style="left:773px;top:321px;overflow:visible;" width="9" height="2" viewBox="0 0 9 2"><path d="M0 0.5 H9" stroke="#666" stroke-dasharray="1 2"/></svg>
<svg class="a" style="left:773px;top:423px;overflow:visible;" width="9" height="2" viewBox="0 0 9 2"><path d="M0 0.5 H9" stroke="#666" stroke-dasharray="1 2"/></svg>
<svg class="a" style="left:827px;top:269.5px;overflow:visible;" width="44" height="20" viewBox="0 0 44 20"><path d="M0.5 0 V17.5 H44" stroke="#666" fill="none" stroke-dasharray="1 2"/></svg>
<svg class="a" style="left:827px;top:371.5px;overflow:visible;" width="44" height="20" viewBox="0 0 44 20"><path d="M0.5 0 V17.5 H44" stroke="#666" fill="none" stroke-dasharray="1 2"/></svg>
<svg class="a" style="left:812px;top:209px;overflow:visible;" width="33" height="20" viewBox="0 0 33 20"><path d="M12 2 Q12 0 16.5 0 Q21 0 21 2 L20 4 Q28 4 31 8 L33 8 L33 11 L30 11 L29 17 Q28 20 24 20 L9 20 Q5 20 4 17 L3 11 L0 11 L0 8 L2 8 Q5 4 13 4 Z" fill="#0f4d3d"/><path d="M6 12 Q8 8 16 9 Q25 8 27 12 Q25 16 16 15 Q8 16 6 12 Z" fill="#dadcd6"/></svg>
<svg class="a" style="left:813px;top:250px;overflow:visible;" width="31" height="8" viewBox="0 0 31 8"><rect x="0.5" y="0.5" width="30" height="6" fill="#fff" stroke="#000"/></svg>
<svg class="a" style="left:870px;top:284px;overflow:visible;" width="31" height="8" viewBox="0 0 31 8"><rect x="0.5" y="0.5" width="30" height="6" fill="#fff" stroke="#000"/></svg>
<svg class="a" style="left:813px;top:316px;overflow:visible;" width="32" height="10" viewBox="0 0 32 10"><rect x="0" y="1" width="32" height="8" fill="#0f4d3d"/><path d="M2 3 H6 M9 3 H12 M15 3 H20 M23 3 H27" stroke="#b8c8c0" stroke-width="1"/></svg>
<svg class="a" style="left:812px;top:348px;overflow:visible;" width="33" height="15" viewBox="0 0 33 15"><path d="M0.5 5 Q16 -1.5 31.5 5 L31.5 13.5 Q16 6.5 0.5 13.5 Z" fill="#fff" stroke="#000" stroke-width="1"/></svg>
<svg class="a" style="left:869px;top:382px;overflow:visible;" width="33" height="15" viewBox="0 0 33 15"><path d="M0.5 5 Q16 -1.5 31.5 5 L31.5 13.5 Q16 6.5 0.5 13.5 Z" fill="#fff" stroke="#000" stroke-width="1"/></svg>
<svg class="a" style="left:812px;top:414px;overflow:visible;" width="33" height="15" viewBox="0 0 33 15"><path d="M0.5 7 Q16 -1 32 7 L32 14 Q16 6 0.5 14 Z" fill="#0f4d3d"/><path d="M13 4 V9.5 M20 4 V9.5" stroke="#cfe0d8" stroke-width="0.8"/></svg>
<div class="t" style="left:849px;top:212.90px;font-size:14.3px;color:#111;font-weight:normal;">Casserole Dish</div>
<div class="t" style="left:849px;top:246.90px;font-size:14.3px;color:#111;font-weight:normal;">Bottom Text</div>
<div class="t" style="left:906px;top:280.90px;font-size:14.3px;color:#111;font-weight:normal;">Envelope 1</div>
<div class="t" style="left:849px;top:314.90px;font-size:14.3px;color:#111;font-weight:normal;">Letters 1</div>
<div class="t" style="left:849px;top:348.90px;font-size:14.3px;color:#111;font-weight:normal;">Bridge Up</div>
<div class="t" style="left:906px;top:382.90px;font-size:14.3px;color:#111;font-weight:normal;">Envelope 2</div>
<div class="t" style="left:849px;top:416.90px;font-size:14.3px;color:#111;font-weight:normal;">Letters 2</div>
<div class="a" style="left:753px;top:443px;width:283px;height:5px;background:#fafafa;"></div>
<div class="a" style="left:753px;top:448px;width:283px;height:27px;background:linear-gradient(#c2d2e2,#d9e4ef);"></div>
<div class="a" style="left:753px;top:475px;width:283px;height:2px;background:#fff;"></div>
<div class="t" style="left:757px;top:456.15px;font-size:14px;color:#101010;font-weight:normal;">Properties</div>
<svg class="a" style="left:1004px;top:457px;overflow:visible;" width="9" height="12" viewBox="0 0 9 12"><rect x="2" y="1" width="5" height="6" fill="none" stroke="#000" stroke-width="1.6"/><rect x="0" y="7" width="9" height="1.6" fill="#000"/><rect x="3.8" y="8" width="1.5" height="4" fill="#000"/></svg>
<div class="a" style="left:1021px;top:456px;width:12px;height:12px;background:#c84646;"></div><svg class="a" style="left:1021px;top:456px;overflow:visible;" width="12" height="12" viewBox="0 0 12 12"><path d="M3.5 3.5 L8.5 8.5 M8.5 3.5 L3.5 8.5" stroke="#fff" stroke-width="1.6"/></svg>
<div class="a" style="left:753px;top:497px;width:284px;height:248px;background:#f0f0f0;border-top:1px solid #fff;border-left:1px solid #fff;border-right:2px solid #777;border-bottom:2px solid #777;box-sizing:border-box;"></div>
<div class="a" style="left:753px;top:478px;width:46px;height:21px;background:#f0f0f0;border-top:1px solid #fff;border-left:1px solid #fff;border-right:2px solid #777;box-sizing:border-box;"></div>
<div class="t" style="left:760px;top:480.72px;font-size:12.5px;color:#111;font-weight:normal;letter-spacing:-0.9px;">Color</div>
<div class="a" style="left:766px;top:502px;width:65px;height:23px;background:#f0f0f0;border-top:1px solid #fff;border-left:1px solid #fff;border-bottom:2px solid #6a6a6a;border-right:2px solid #6a6a6a;box-shadow:inset -1px -1px 0 #a0a0a0;box-sizing:border-box;"></div>
<div class="a" style="left:766px;top:502px;width:65px;height:23px;border:1px solid #555;box-sizing:border-box;"></div>
<div class="t" style="left:777px;top:507.84px;font-size:12px;color:#000;font-weight:normal;letter-spacing:-0.55px;">Thread...</div>
<div class="a" style="left:840px;top:502px;width:63px;height:23px;background:#f0f0f0;border-top:1px solid #fff;border-left:1px solid #fff;border-bottom:2px solid #6a6a6a;border-right:2px solid #6a6a6a;box-shadow:inset -1px -1px 0 #a0a0a0;box-sizing:border-box;"></div>
<div class="t" style="left:851px;top:507.84px;font-size:12px;color:#000;font-weight:normal;letter-spacing:-0.55px;">1 Color...</div>
<div class="a" style="left:913px;top:502px;width:65px;height:23px;background:#f0f0f0;border-top:1px solid #fff;border-left:1px solid #fff;border-bottom:2px solid #6a6a6a;border-right:2px solid #6a6a6a;box-shadow:inset -1px -1px 0 #a0a0a0;box-sizing:border-box;"></div>
<div class="t" style="left:924px;top:507.84px;font-size:12px;color:#000;font-weight:normal;letter-spacing:-0.55px;">Preferred</div>
<div class="t" style="left:780px;top:528.54px;font-size:12px;color:#111;font-weight:normal;letter-spacing:-0.55px;">Click below to change individual colors.</div>
<div class="a" style="left:761px;top:550px;width:268px;height:187px;background:#f0f0f0;border-top:1px solid #fff;border-left:1px solid #fff;border-right:2px solid #707070;border-bottom:2px solid #707070;box-sizing:border-box;"></div>
<div class="a" style="left:767px;top:556px;width:239px;height:175px;background:#fff;"></div>
<div class="a" style="left:1013px;top:574px;width:2px;height:70px;background:#7a7a7a;"></div>
<div class="a" style="left:768px;top:557px;width:93px;height:46.5px;background:#11594b;"></div>
<div class="t" style="left:867px;top:560.34px;font-size:12px;color:#111;font-weight:normal;letter-spacing:-0.2px;">1: Candle Poly</div>
<div class="t" style="left:867px;top:575.34px;font-size:12px;color:#111;font-weight:normal;letter-spacing:-0.2px;">6178</div>
<div class="a" style="left:768px;top:603.5px;width:93px;height:46.5px;background:#dcdfda;"></div>
<div class="t" style="left:867px;top:606.84px;font-size:12px;color:#111;font-weight:normal;letter-spacing:-0.2px;">2: Candle Poly</div>
<div class="t" style="left:867px;top:621.84px;font-size:12px;color:#111;font-weight:normal;letter-spacing:-0.2px;">7949</div>
<div class="a" style="left:768px;top:650px;width:93px;height:46.5px;background:#28292b;"></div>
<div class="t" style="left:867px;top:653.34px;font-size:12px;color:#111;font-weight:normal;letter-spacing:-0.2px;">3: Candle Poly</div>
<div class="t" style="left:867px;top:668.34px;font-size:12px;color:#111;font-weight:normal;letter-spacing:-0.2px;">7844</div>
<div class="a" style="left:768px;top:697px;width:93px;height:33.5px;background:#11594b;"></div>
<div class="t" style="left:867px;top:700.34px;font-size:12px;color:#111;font-weight:normal;letter-spacing:-0.2px;">4: Candle Poly</div>
<div class="t" style="left:867px;top:715.34px;font-size:12px;color:#111;font-weight:normal;letter-spacing:-0.2px;">6178</div>
<div class="a" style="left:1px;top:746px;width:1036px;height:25px;background:#f0f0f0;"></div>
<div class="t" style="left:5px;top:753.15px;font-size:14px;color:#111;font-weight:normal;">Zoom: 100%&nbsp; Cursor: -44.9mm x 14.0mm</div>
<div class="t" style="left:660px;top:753.15px;font-size:14px;color:#111;font-weight:normal;">Hoop: 130mm x 180mm</div>
<div class="t" style="left:845px;top:753.15px;font-size:14px;color:#111;font-weight:normal;">124.8mm x 106.6mm</div>
<svg class="a" style="left:1024px;top:756px;overflow:visible;" width="12" height="12" viewBox="0 0 12 12"><rect x="9" y="1" width="2" height="2" fill="#a0a0a0"/><rect x="9" y="5" width="2" height="2" fill="#a0a0a0"/><rect x="5" y="5" width="2" height="2" fill="#a0a0a0"/><rect x="9" y="9" width="2" height="2" fill="#a0a0a0"/><rect x="5" y="9" width="2" height="2" fill="#a0a0a0"/><rect x="1" y="9" width="2" height="2" fill="#a0a0a0"/></svg>
<div class="a" style="left:0;top:0;width:1036px;height:770px;border:1px solid #a9a9a9;border-radius:8px;"></div>
</body></html>
